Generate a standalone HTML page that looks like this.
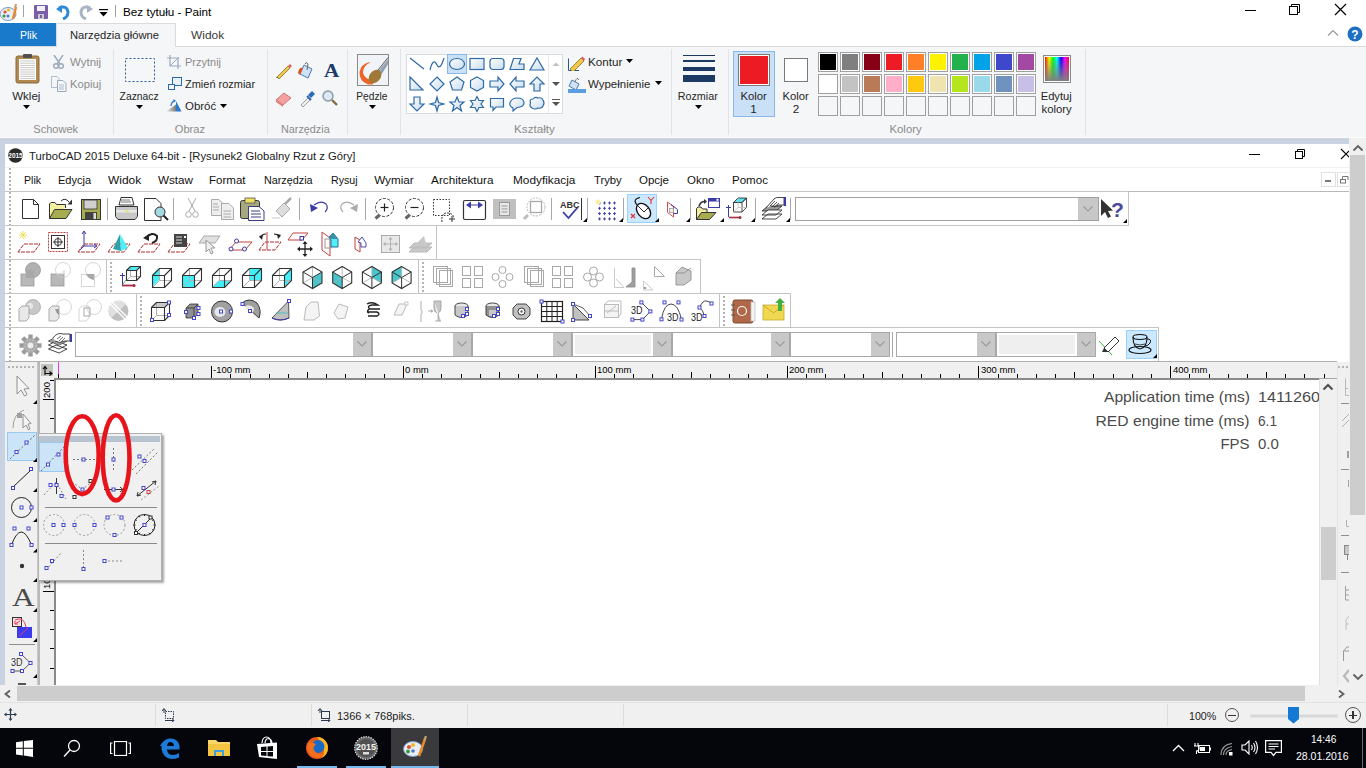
<!DOCTYPE html><html><head><meta charset="utf-8"><style>
html,body{margin:0;padding:0;width:1366px;height:768px;overflow:hidden;background:#fff}
body>div,body>svg{position:absolute}
.t{white-space:nowrap;font-family:"Liberation Sans",sans-serif}
</style></head><body>
<div style="left:0px;top:0px;width:1366px;height:23px;background:#fff"></div>
<div style="left:0px;top:23px;width:1366px;height:23px;background:#fff"></div>
<div style="left:0px;top:46px;width:1366px;height:1px;background:#dadbdc"></div>
<div style="left:0px;top:23px;width:56px;height:23px;background:#1979ca"></div>
<div style="left:56px;top:23px;width:120px;height:24px;background:#f5f6f7;border:1px solid #dadbdc;border-bottom:none;box-sizing:border-box"></div>
<div style="left:0px;top:47px;width:1366px;height:90px;background:#f5f6f7"></div>
<div style="left:0px;top:137px;width:1366px;height:1px;background:#fbfcfd"></div>
<div style="left:0px;top:138px;width:1366px;height:1px;background:#cfd4dc"></div>
<div style="left:0px;top:139px;width:1366px;height:546px;background:#c9d2e2"></div>
<div style="left:5px;top:144px;width:1344px;height:541px;background:#fff"></div>
<svg style="left:8px;top:148px;" width="15" height="15" viewBox="0 0 15 15"><circle cx="7.5" cy="7.5" r="7.3" fill="#2a2a2a"/><text x="7.5" y="10" font-family="Liberation Sans" font-weight="bold" font-size="6.5" fill="#fff" text-anchor="middle">2015</text></svg>
<div class="t" style="left:28.5px;top:149.5px;font-size:11.7px;line-height:12px;color:#1a1a1a;transform:scaleX(0.962);transform-origin:left;">TurboCAD 2015 Deluxe 64-bit - [Rysunek2 Globalny Rzut z Góry]</div>
<svg style="left:1249px;top:148px;" width="14" height="12" viewBox="0 0 14 12"><rect x="0" y="6" width="11" height="1" fill="#000"/></svg>
<svg style="left:1294px;top:148px;" width="14" height="12" viewBox="0 0 14 12"><rect x="1.5" y="3.5" width="7" height="7" fill="none" stroke="#000"/><path d="M3.5 3.5 V1.5 H10.5 V8.5 H8.5" fill="none" stroke="#000"/></svg>
<svg style="left:1340px;top:148px;" width="9" height="12" viewBox="0 0 9 12"><path d="M1 1 L11 11 M11 1 L1 11" stroke="#000" stroke-width="1.1"/></svg>
<div style="left:5px;top:167px;width:1344px;height:1px;background:#f0f0f0"></div>
<svg style="left:9px;top:168px" width="3" height="196" viewBox="0 0 3 196"><rect x="0" y="0" width="2" height="2" fill="#b4b4b4"/><rect x="0" y="4" width="2" height="2" fill="#b4b4b4"/><rect x="0" y="8" width="2" height="2" fill="#b4b4b4"/><rect x="0" y="12" width="2" height="2" fill="#b4b4b4"/><rect x="0" y="16" width="2" height="2" fill="#b4b4b4"/><rect x="0" y="20" width="2" height="2" fill="#b4b4b4"/><rect x="0" y="24" width="2" height="2" fill="#b4b4b4"/><rect x="0" y="28" width="2" height="2" fill="#b4b4b4"/><rect x="0" y="32" width="2" height="2" fill="#b4b4b4"/><rect x="0" y="36" width="2" height="2" fill="#b4b4b4"/><rect x="0" y="40" width="2" height="2" fill="#b4b4b4"/><rect x="0" y="44" width="2" height="2" fill="#b4b4b4"/><rect x="0" y="48" width="2" height="2" fill="#b4b4b4"/><rect x="0" y="52" width="2" height="2" fill="#b4b4b4"/><rect x="0" y="56" width="2" height="2" fill="#b4b4b4"/><rect x="0" y="60" width="2" height="2" fill="#b4b4b4"/><rect x="0" y="64" width="2" height="2" fill="#b4b4b4"/><rect x="0" y="68" width="2" height="2" fill="#b4b4b4"/><rect x="0" y="72" width="2" height="2" fill="#b4b4b4"/><rect x="0" y="76" width="2" height="2" fill="#b4b4b4"/><rect x="0" y="80" width="2" height="2" fill="#b4b4b4"/><rect x="0" y="84" width="2" height="2" fill="#b4b4b4"/><rect x="0" y="88" width="2" height="2" fill="#b4b4b4"/><rect x="0" y="92" width="2" height="2" fill="#b4b4b4"/><rect x="0" y="96" width="2" height="2" fill="#b4b4b4"/><rect x="0" y="100" width="2" height="2" fill="#b4b4b4"/><rect x="0" y="104" width="2" height="2" fill="#b4b4b4"/><rect x="0" y="108" width="2" height="2" fill="#b4b4b4"/><rect x="0" y="112" width="2" height="2" fill="#b4b4b4"/><rect x="0" y="116" width="2" height="2" fill="#b4b4b4"/><rect x="0" y="120" width="2" height="2" fill="#b4b4b4"/><rect x="0" y="124" width="2" height="2" fill="#b4b4b4"/><rect x="0" y="128" width="2" height="2" fill="#b4b4b4"/><rect x="0" y="132" width="2" height="2" fill="#b4b4b4"/><rect x="0" y="136" width="2" height="2" fill="#b4b4b4"/><rect x="0" y="140" width="2" height="2" fill="#b4b4b4"/><rect x="0" y="144" width="2" height="2" fill="#b4b4b4"/><rect x="0" y="148" width="2" height="2" fill="#b4b4b4"/><rect x="0" y="152" width="2" height="2" fill="#b4b4b4"/><rect x="0" y="156" width="2" height="2" fill="#b4b4b4"/><rect x="0" y="160" width="2" height="2" fill="#b4b4b4"/><rect x="0" y="164" width="2" height="2" fill="#b4b4b4"/><rect x="0" y="168" width="2" height="2" fill="#b4b4b4"/><rect x="0" y="172" width="2" height="2" fill="#b4b4b4"/><rect x="0" y="176" width="2" height="2" fill="#b4b4b4"/><rect x="0" y="180" width="2" height="2" fill="#b4b4b4"/><rect x="0" y="184" width="2" height="2" fill="#b4b4b4"/><rect x="0" y="188" width="2" height="2" fill="#b4b4b4"/><rect x="0" y="192" width="2" height="2" fill="#b4b4b4"/></svg>
<div class="t" style="left:23.5px;top:174.2px;font-size:11.7px;line-height:12px;color:#111;transform:scaleX(0.905);transform-origin:left;">Plik</div>
<div class="t" style="left:58.0px;top:174.2px;font-size:11.7px;line-height:12px;color:#111;transform:scaleX(0.944);transform-origin:left;">Edycja</div>
<div class="t" style="left:108.0px;top:174.2px;font-size:11.7px;line-height:12px;color:#111;transform:scaleX(1.020);transform-origin:left;">Widok</div>
<div class="t" style="left:158.0px;top:174.2px;font-size:11.7px;line-height:12px;color:#111;">Wstaw</div>
<div class="t" style="left:209.2px;top:174.2px;font-size:11.7px;line-height:12px;color:#111;transform:scaleX(0.987);transform-origin:left;">Format</div>
<div class="t" style="left:263.5px;top:174.2px;font-size:11.7px;line-height:12px;color:#111;transform:scaleX(0.922);transform-origin:left;">Narzędzia</div>
<div class="t" style="left:330.5px;top:174.2px;font-size:11.7px;line-height:12px;color:#111;transform:scaleX(0.910);transform-origin:left;">Rysuj</div>
<div class="t" style="left:374.2px;top:174.2px;font-size:11.7px;line-height:12px;color:#111;">Wymiar</div>
<div class="t" style="left:431.1px;top:174.2px;font-size:11.7px;line-height:12px;color:#111;">Architektura</div>
<div class="t" style="left:512.5px;top:174.2px;font-size:11.7px;line-height:12px;color:#111;transform:scaleX(1.012);transform-origin:left;">Modyfikacja</div>
<div class="t" style="left:593.5px;top:174.2px;font-size:11.7px;line-height:12px;color:#111;transform:scaleX(0.964);transform-origin:left;">Tryby</div>
<div class="t" style="left:639.2px;top:174.2px;font-size:11.7px;line-height:12px;color:#111;transform:scaleX(0.983);transform-origin:left;">Opcje</div>
<div class="t" style="left:686.5px;top:174.2px;font-size:11.7px;line-height:12px;color:#111;transform:scaleX(0.980);transform-origin:left;">Okno</div>
<div class="t" style="left:731.5px;top:174.2px;font-size:11.7px;line-height:12px;color:#111;transform:scaleX(0.988);transform-origin:left;">Pomoc</div>
<div style="left:1321px;top:172px;width:15px;height:15px;border:1px solid #e0e0e0;box-sizing:border-box"></div>
<svg style="left:1325px;top:180px;" width="8" height="3" viewBox="0 0 8 3"><rect x="0" y="0" width="6" height="2" fill="#777"/></svg>
<div style="left:1337px;top:172px;width:12px;height:15px;border:1px solid #e0e0e0;border-right:none;box-sizing:border-box"></div>
<svg style="left:1340px;top:175px;" width="9" height="9" viewBox="0 0 9 9"><rect x="0.5" y="4.5" width="5" height="3.5" fill="none" stroke="#777"/><path d="M2.5 4.5 V1.5 H8 V5" fill="none" stroke="#777"/></svg>
<div style="left:5px;top:191px;width:1344px;height:1px;background:#b8b8b8"></div>
<div style="left:5px;top:191px;width:1123px;height:1px;background:#c4c4c4"></div>
<div style="left:5px;top:225px;width:1123px;height:1px;background:#c4c4c4"></div>
<div style="left:1128px;top:191px;width:1px;height:35px;background:#c4c4c4"></div>
<div style="left:5px;top:225px;width:431px;height:1px;background:#c4c4c4"></div>
<div style="left:5px;top:259px;width:431px;height:1px;background:#c4c4c4"></div>
<div style="left:436px;top:225px;width:1px;height:35px;background:#c4c4c4"></div>
<div style="left:5px;top:259px;width:101px;height:1px;background:#c4c4c4"></div>
<div style="left:5px;top:293px;width:101px;height:1px;background:#c4c4c4"></div>
<div style="left:106px;top:259px;width:1px;height:35px;background:#c4c4c4"></div>
<div style="left:106px;top:259px;width:312px;height:1px;background:#c4c4c4"></div>
<div style="left:106px;top:293px;width:312px;height:1px;background:#c4c4c4"></div>
<div style="left:418px;top:259px;width:1px;height:35px;background:#c4c4c4"></div>
<svg style="left:110px;top:262px" width="3" height="30" viewBox="0 0 3 30"><rect x="0" y="0" width="2" height="2" fill="#b4b4b4"/><rect x="0" y="4" width="2" height="2" fill="#b4b4b4"/><rect x="0" y="8" width="2" height="2" fill="#b4b4b4"/><rect x="0" y="12" width="2" height="2" fill="#b4b4b4"/><rect x="0" y="16" width="2" height="2" fill="#b4b4b4"/><rect x="0" y="20" width="2" height="2" fill="#b4b4b4"/><rect x="0" y="24" width="2" height="2" fill="#b4b4b4"/><rect x="0" y="28" width="2" height="2" fill="#b4b4b4"/></svg>
<div style="left:418px;top:259px;width:282px;height:1px;background:#c4c4c4"></div>
<div style="left:418px;top:293px;width:282px;height:1px;background:#c4c4c4"></div>
<div style="left:700px;top:259px;width:1px;height:35px;background:#c4c4c4"></div>
<svg style="left:422px;top:262px" width="3" height="30" viewBox="0 0 3 30"><rect x="0" y="0" width="2" height="2" fill="#b4b4b4"/><rect x="0" y="4" width="2" height="2" fill="#b4b4b4"/><rect x="0" y="8" width="2" height="2" fill="#b4b4b4"/><rect x="0" y="12" width="2" height="2" fill="#b4b4b4"/><rect x="0" y="16" width="2" height="2" fill="#b4b4b4"/><rect x="0" y="20" width="2" height="2" fill="#b4b4b4"/><rect x="0" y="24" width="2" height="2" fill="#b4b4b4"/><rect x="0" y="28" width="2" height="2" fill="#b4b4b4"/></svg>
<div style="left:5px;top:293px;width:131px;height:1px;background:#c4c4c4"></div>
<div style="left:5px;top:327px;width:131px;height:1px;background:#c4c4c4"></div>
<div style="left:136px;top:293px;width:1px;height:35px;background:#c4c4c4"></div>
<div style="left:136px;top:293px;width:583px;height:1px;background:#c4c4c4"></div>
<div style="left:136px;top:327px;width:583px;height:1px;background:#c4c4c4"></div>
<div style="left:719px;top:293px;width:1px;height:35px;background:#c4c4c4"></div>
<svg style="left:140px;top:296px" width="3" height="30" viewBox="0 0 3 30"><rect x="0" y="0" width="2" height="2" fill="#b4b4b4"/><rect x="0" y="4" width="2" height="2" fill="#b4b4b4"/><rect x="0" y="8" width="2" height="2" fill="#b4b4b4"/><rect x="0" y="12" width="2" height="2" fill="#b4b4b4"/><rect x="0" y="16" width="2" height="2" fill="#b4b4b4"/><rect x="0" y="20" width="2" height="2" fill="#b4b4b4"/><rect x="0" y="24" width="2" height="2" fill="#b4b4b4"/><rect x="0" y="28" width="2" height="2" fill="#b4b4b4"/></svg>
<div style="left:719px;top:293px;width:71px;height:1px;background:#c4c4c4"></div>
<div style="left:719px;top:327px;width:71px;height:1px;background:#c4c4c4"></div>
<div style="left:790px;top:293px;width:1px;height:35px;background:#c4c4c4"></div>
<svg style="left:723px;top:296px" width="3" height="30" viewBox="0 0 3 30"><rect x="0" y="0" width="2" height="2" fill="#b4b4b4"/><rect x="0" y="4" width="2" height="2" fill="#b4b4b4"/><rect x="0" y="8" width="2" height="2" fill="#b4b4b4"/><rect x="0" y="12" width="2" height="2" fill="#b4b4b4"/><rect x="0" y="16" width="2" height="2" fill="#b4b4b4"/><rect x="0" y="20" width="2" height="2" fill="#b4b4b4"/><rect x="0" y="24" width="2" height="2" fill="#b4b4b4"/><rect x="0" y="28" width="2" height="2" fill="#b4b4b4"/></svg>
<div style="left:5px;top:327px;width:1153px;height:1px;background:#c4c4c4"></div>
<div style="left:5px;top:361px;width:1153px;height:1px;background:#c4c4c4"></div>
<div style="left:1158px;top:327px;width:1px;height:35px;background:#c4c4c4"></div>
<div style="left:107px;top:198px;width:1px;height:22px;background:#a8a8a8"></div>
<div style="left:173px;top:198px;width:1px;height:22px;background:#a8a8a8"></div>
<div style="left:299px;top:198px;width:1px;height:22px;background:#a8a8a8"></div>
<div style="left:365px;top:198px;width:1px;height:22px;background:#a8a8a8"></div>
<div style="left:551px;top:198px;width:1px;height:22px;background:#a8a8a8"></div>
<div style="left:587px;top:198px;width:1px;height:22px;background:#a8a8a8"></div>
<div style="left:623px;top:198px;width:1px;height:22px;background:#a8a8a8"></div>
<div style="left:690px;top:198px;width:1px;height:22px;background:#a8a8a8"></div>
<div style="left:755px;top:198px;width:1px;height:22px;background:#a8a8a8"></div>
<div style="left:790px;top:198px;width:1px;height:22px;background:#a8a8a8"></div>
<div style="left:795px;top:197px;width:304px;height:24px;background:#fff;border:1px solid #a0a0a0;box-sizing:border-box"></div>
<div style="left:1078px;top:198px;width:20px;height:22px;background:#c8c8c8"></div>
<svg style="left:1082px;top:205px;" width="12" height="8" viewBox="0 0 12 8"><path d="M1.5 1.5 L6 6 L10.5 1.5" fill="none" stroke="#9a9a9a" stroke-width="1.2"/></svg>
<div style="left:75px;top:332px;width:297px;height:25px;background:#fff;border:1px solid #a8a8a8;box-sizing:border-box"></div>
<div style="left:353px;top:333px;width:18px;height:23px;background:#c8c8c8"></div>
<svg style="left:356px;top:340px;" width="12" height="8" viewBox="0 0 12 8"><path d="M1.5 1.5 L6 6 L10.5 1.5" fill="none" stroke="#9a9a9a" stroke-width="1.2"/></svg>
<div style="left:372px;top:332px;width:100px;height:25px;background:#fff;border:1px solid #a8a8a8;box-sizing:border-box"></div>
<div style="left:453px;top:333px;width:18px;height:23px;background:#c8c8c8"></div>
<svg style="left:456px;top:340px;" width="12" height="8" viewBox="0 0 12 8"><path d="M1.5 1.5 L6 6 L10.5 1.5" fill="none" stroke="#9a9a9a" stroke-width="1.2"/></svg>
<div style="left:472px;top:332px;width:100px;height:25px;background:#fff;border:1px solid #a8a8a8;box-sizing:border-box"></div>
<div style="left:553px;top:333px;width:18px;height:23px;background:#c8c8c8"></div>
<svg style="left:556px;top:340px;" width="12" height="8" viewBox="0 0 12 8"><path d="M1.5 1.5 L6 6 L10.5 1.5" fill="none" stroke="#9a9a9a" stroke-width="1.2"/></svg>
<div style="left:572px;top:332px;width:100px;height:25px;background:#fff;border:1px solid #a8a8a8;box-sizing:border-box"></div>
<div style="left:575px;top:335px;width:76px;height:19px;background:#efefef"></div>
<div style="left:653px;top:333px;width:18px;height:23px;background:#c8c8c8"></div>
<svg style="left:656px;top:340px;" width="12" height="8" viewBox="0 0 12 8"><path d="M1.5 1.5 L6 6 L10.5 1.5" fill="none" stroke="#9a9a9a" stroke-width="1.2"/></svg>
<div style="left:672px;top:332px;width:118px;height:25px;background:#fff;border:1px solid #a8a8a8;box-sizing:border-box"></div>
<div style="left:771px;top:333px;width:18px;height:23px;background:#c8c8c8"></div>
<svg style="left:774px;top:340px;" width="12" height="8" viewBox="0 0 12 8"><path d="M1.5 1.5 L6 6 L10.5 1.5" fill="none" stroke="#9a9a9a" stroke-width="1.2"/></svg>
<div style="left:790px;top:332px;width:100px;height:25px;background:#fff;border:1px solid #a8a8a8;box-sizing:border-box"></div>
<div style="left:871px;top:333px;width:18px;height:23px;background:#c8c8c8"></div>
<svg style="left:874px;top:340px;" width="12" height="8" viewBox="0 0 12 8"><path d="M1.5 1.5 L6 6 L10.5 1.5" fill="none" stroke="#9a9a9a" stroke-width="1.2"/></svg>
<div style="left:892px;top:332px;width:1px;height:25px;background:#a8a8a8"></div>
<div style="left:896px;top:332px;width:100px;height:25px;background:#fff;border:1px solid #a8a8a8;box-sizing:border-box"></div>
<div style="left:977px;top:333px;width:18px;height:23px;background:#c8c8c8"></div>
<svg style="left:980px;top:340px;" width="12" height="8" viewBox="0 0 12 8"><path d="M1.5 1.5 L6 6 L10.5 1.5" fill="none" stroke="#9a9a9a" stroke-width="1.2"/></svg>
<div style="left:996px;top:332px;width:100px;height:25px;background:#fff;border:1px solid #a8a8a8;box-sizing:border-box"></div>
<div style="left:999px;top:335px;width:76px;height:19px;background:#efefef"></div>
<div style="left:1077px;top:333px;width:18px;height:23px;background:#c8c8c8"></div>
<svg style="left:1080px;top:340px;" width="12" height="8" viewBox="0 0 12 8"><path d="M1.5 1.5 L6 6 L10.5 1.5" fill="none" stroke="#9a9a9a" stroke-width="1.2"/></svg>
<div style="left:5px;top:361px;width:1332px;height:2px;background:#b0b0b0"></div>
<div style="left:40px;top:362px;width:1297px;height:16px;background:#f0f0f0"></div>
<div style="left:54px;top:378px;width:1265px;height:2px;background:#8a8a8a"></div>
<div style="left:41px;top:364px;width:12px;height:13px;background:#c0c4bc"></div>
<svg style="left:42px;top:365px;" width="11" height="11" viewBox="0 0 11 11"><path d="M3 10 V2 M1 4 L3 1.5 L5 4 M3 8.5 H10 M7.5 6.5 L10 8.5 L7.5 10.5" fill="none" stroke="#000" stroke-width="1.1"/></svg>
<div style="left:58px;top:362px;width:1px;height:16px;background:#e040e0"></div>
<svg style="left:0px;top:0px" width="1366" height="768" viewBox="0 0 1366 768"><rect x="58" y="374" width="1" height="4" fill="#000"/><rect x="77" y="374" width="1" height="4" fill="#000"/><rect x="96" y="374" width="1" height="4" fill="#000"/><rect x="115" y="372" width="1" height="6" fill="#000"/><rect x="134" y="374" width="1" height="4" fill="#000"/><rect x="154" y="374" width="1" height="4" fill="#000"/><rect x="173" y="374" width="1" height="4" fill="#000"/><rect x="192" y="374" width="1" height="4" fill="#000"/><rect x="211" y="366" width="1" height="12" fill="#000"/><rect x="230" y="374" width="1" height="4" fill="#000"/><rect x="250" y="374" width="1" height="4" fill="#000"/><rect x="269" y="374" width="1" height="4" fill="#000"/><rect x="288" y="374" width="1" height="4" fill="#000"/><rect x="307" y="372" width="1" height="6" fill="#000"/><rect x="326" y="374" width="1" height="4" fill="#000"/><rect x="345" y="374" width="1" height="4" fill="#000"/><rect x="365" y="374" width="1" height="4" fill="#000"/><rect x="384" y="374" width="1" height="4" fill="#000"/><rect x="403" y="366" width="1" height="12" fill="#000"/><rect x="422" y="374" width="1" height="4" fill="#000"/><rect x="441" y="374" width="1" height="4" fill="#000"/><rect x="461" y="374" width="1" height="4" fill="#000"/><rect x="480" y="374" width="1" height="4" fill="#000"/><rect x="499" y="372" width="1" height="6" fill="#000"/><rect x="518" y="374" width="1" height="4" fill="#000"/><rect x="537" y="374" width="1" height="4" fill="#000"/><rect x="556" y="374" width="1" height="4" fill="#000"/><rect x="576" y="374" width="1" height="4" fill="#000"/><rect x="595" y="366" width="1" height="12" fill="#000"/><rect x="614" y="374" width="1" height="4" fill="#000"/><rect x="633" y="374" width="1" height="4" fill="#000"/><rect x="652" y="374" width="1" height="4" fill="#000"/><rect x="672" y="374" width="1" height="4" fill="#000"/><rect x="691" y="372" width="1" height="6" fill="#000"/><rect x="710" y="374" width="1" height="4" fill="#000"/><rect x="729" y="374" width="1" height="4" fill="#000"/><rect x="748" y="374" width="1" height="4" fill="#000"/><rect x="767" y="374" width="1" height="4" fill="#000"/><rect x="787" y="366" width="1" height="12" fill="#000"/><rect x="806" y="374" width="1" height="4" fill="#000"/><rect x="825" y="374" width="1" height="4" fill="#000"/><rect x="844" y="374" width="1" height="4" fill="#000"/><rect x="863" y="374" width="1" height="4" fill="#000"/><rect x="882" y="372" width="1" height="6" fill="#000"/><rect x="902" y="374" width="1" height="4" fill="#000"/><rect x="921" y="374" width="1" height="4" fill="#000"/><rect x="940" y="374" width="1" height="4" fill="#000"/><rect x="959" y="374" width="1" height="4" fill="#000"/><rect x="978" y="366" width="1" height="12" fill="#000"/><rect x="998" y="374" width="1" height="4" fill="#000"/><rect x="1017" y="374" width="1" height="4" fill="#000"/><rect x="1036" y="374" width="1" height="4" fill="#000"/><rect x="1055" y="374" width="1" height="4" fill="#000"/><rect x="1074" y="372" width="1" height="6" fill="#000"/><rect x="1093" y="374" width="1" height="4" fill="#000"/><rect x="1113" y="374" width="1" height="4" fill="#000"/><rect x="1132" y="374" width="1" height="4" fill="#000"/><rect x="1151" y="374" width="1" height="4" fill="#000"/><rect x="1170" y="366" width="1" height="12" fill="#000"/><rect x="1189" y="374" width="1" height="4" fill="#000"/><rect x="1209" y="374" width="1" height="4" fill="#000"/><rect x="1228" y="374" width="1" height="4" fill="#000"/><rect x="1247" y="374" width="1" height="4" fill="#000"/><rect x="1266" y="372" width="1" height="6" fill="#000"/><rect x="1285" y="374" width="1" height="4" fill="#000"/><rect x="1304" y="374" width="1" height="4" fill="#000"/><rect x="1324" y="374" width="1" height="4" fill="#000"/></svg>
<div class="t" style="left:213.0px;top:365.0px;font-size:9.5px;line-height:9.5px;color:#000;">-100 mm</div>
<div class="t" style="left:405.0px;top:365.0px;font-size:9.5px;line-height:9.5px;color:#000;">0 mm</div>
<div class="t" style="left:597.0px;top:365.0px;font-size:9.5px;line-height:9.5px;color:#000;">100 mm</div>
<div class="t" style="left:789.0px;top:365.0px;font-size:9.5px;line-height:9.5px;color:#000;">200 mm</div>
<div class="t" style="left:981.0px;top:365.0px;font-size:9.5px;line-height:9.5px;color:#000;">300 mm</div>
<div class="t" style="left:1173.0px;top:365.0px;font-size:9.5px;line-height:9.5px;color:#000;">400 mm</div>
<div style="left:40px;top:376px;width:14px;height:309px;background:#f0f0f0"></div>
<div style="left:38px;top:362px;width:2px;height:323px;background:#b8b8b8"></div>
<svg style="left:0px;top:0px" width="1366" height="768" viewBox="0 0 1366 768"><rect x="50" y="380" width="4" height="1" fill="#000"/><rect x="43" y="399" width="11" height="1" fill="#000"/><rect x="50" y="418" width="4" height="1" fill="#000"/><rect x="50" y="437" width="4" height="1" fill="#000"/><rect x="50" y="457" width="4" height="1" fill="#000"/><rect x="50" y="476" width="4" height="1" fill="#000"/><rect x="48" y="495" width="6" height="1" fill="#000"/><rect x="50" y="514" width="4" height="1" fill="#000"/><rect x="50" y="533" width="4" height="1" fill="#000"/><rect x="50" y="552" width="4" height="1" fill="#000"/><rect x="50" y="572" width="4" height="1" fill="#000"/><rect x="43" y="591" width="11" height="1" fill="#000"/><rect x="50" y="610" width="4" height="1" fill="#000"/><rect x="50" y="629" width="4" height="1" fill="#000"/><rect x="50" y="648" width="4" height="1" fill="#000"/><rect x="50" y="668" width="4" height="1" fill="#000"/></svg>
<div class="t" style="left:36.5px;top:384.5px;width:20px;height:10px;font-size:9.6px;line-height:10px;transform:rotate(-90deg);text-align:center;color:#000">200</div>
<div class="t" style="left:36.5px;top:576.3px;width:20px;height:10px;font-size:9.6px;line-height:10px;transform:rotate(-90deg);text-align:center;color:#000">100</div>
<div style="left:54px;top:378px;width:2px;height:307px;background:#8a8a8a"></div>
<div style="left:56px;top:380px;width:1263px;height:305px;background:#fff"></div>
<div class="t" style="left:1109.6px;top:388.8px;font-size:15px;line-height:15px;color:#4a4a4a;transform:scaleX(1.043);transform-origin:right;">Application time (ms)</div>
<div class="t" style="left:1258.0px;top:388.8px;font-size:15px;line-height:15px;color:#4a4a4a;transform:scaleX(1.082);transform-origin:left;">1411260</div>
<div class="t" style="left:1102.1px;top:412.5px;font-size:15px;line-height:15px;color:#4a4a4a;transform:scaleX(1.044);transform-origin:right;">RED engine time (ms)</div>
<div class="t" style="left:1258.0px;top:412.5px;font-size:15px;line-height:15px;color:#4a4a4a;transform:scaleX(0.911);transform-origin:left;">6.1</div>
<div class="t" style="left:1220.4px;top:436.2px;font-size:15px;line-height:15px;color:#4a4a4a;">FPS</div>
<div class="t" style="left:1258.0px;top:436.2px;font-size:15px;line-height:15px;color:#4a4a4a;">0.0</div>
<div style="left:1319px;top:379px;width:18px;height:306px;background:#f0f0f0"></div>
<div style="left:1319px;top:379px;width:1px;height:306px;background:#e0e0e0"></div>
<div style="left:1319px;top:378px;width:18px;height:1px;background:#a8a8a8"></div>
<svg style="left:1322px;top:383px;" width="12" height="8" viewBox="0 0 12 8"><path d="M1.5 6.5 L6 2 L10.5 6.5" fill="none" stroke="#505050" stroke-width="2.2"/></svg>
<div style="left:1321px;top:527px;width:15px;height:53px;background:#cdcdcd"></div>
<div style="left:1337px;top:362px;width:12px;height:323px;background:#f0f0f0"></div>
<div style="left:1337px;top:362px;width:1px;height:323px;background:#e4e4e4"></div>
<div style="left:5px;top:362px;width:33px;height:323px;background:#f0f0f0"></div>
<div style="left:37px;top:362px;width:1px;height:323px;background:#c8c8c8"></div>
<svg style="left:8px;top:366px" width="28" height="3" viewBox="0 0 28 3"><rect x="0" y="0" width="2" height="2" fill="#b4b4b4"/><rect x="4" y="0" width="2" height="2" fill="#b4b4b4"/><rect x="8" y="0" width="2" height="2" fill="#b4b4b4"/><rect x="12" y="0" width="2" height="2" fill="#b4b4b4"/><rect x="16" y="0" width="2" height="2" fill="#b4b4b4"/><rect x="20" y="0" width="2" height="2" fill="#b4b4b4"/><rect x="24" y="0" width="2" height="2" fill="#b4b4b4"/></svg>
<svg style="left:0px;top:0px" width="1366" height="768" viewBox="0 0 1366 768"><path d="M22.5 199.5 H33.5 L38.5 204.5 V218.5 H22.5 Z" fill="#fff" stroke="#333" stroke-width="1"/><path d="M33.5 199.5 V204.5 H38.5" fill="none" stroke="#333"/><path d="M49.5 218.5 V204 L51 202.5 H55 L56.5 204.5 H65.5 V208" fill="#f4f0a0" stroke="#333"/><path d="M49.5 218.5 L54.5 209.5 H72 L66 218.5 Z" fill="#a8ac50" stroke="#333"/><path d="M61 201 Q65 197 69 202" fill="none" stroke="#333"/><path d="M67.5 204.5 L72 199.5 V204.5 Z" fill="#333"/><rect x="81.5" y="199.5" width="19" height="20" fill="#a8ac50" stroke="#333"/><rect x="84" y="200" width="13" height="9" fill="#d0d0d0" stroke="#333" stroke-width="0.8"/><rect x="85" y="212" width="12" height="7.5" fill="#444"/><rect x="93.5" y="213" width="2.5" height="6" fill="#ddd"/><path d="M121 197.5 H132 L134 205 H119 Z" fill="#fff" stroke="#333"/><path d="M121 200 H130 M121 202 H131" stroke="#555" stroke-width="0.8"/><path d="M115.5 206.5 H137.5 V216.5 L135 219.5 H118 L115.5 216.5 Z" fill="#c8c8c8" stroke="#333"/><rect x="116" y="210" width="21" height="2.5" fill="#e8e8e8"/><rect x="125" y="210.5" width="4" height="1.5" fill="#e8e860"/><path d="M144.5 198.5 H156 L161 203.5 V220.5 H144.5 Z" fill="#fff" stroke="#333"/><circle cx="160" cy="212" r="5" fill="#a8d8e0" stroke="#333"/><path d="M163.5 215.5 L168 220" stroke="#222" stroke-width="2"/><path d="M188 198 L195 211 M196 198 L189 211" stroke="#aaa"/><circle cx="188.5" cy="214.5" r="2.8" fill="none" stroke="#aaa"/><circle cx="195.5" cy="214.5" r="2.8" fill="none" stroke="#aaa"/><path d="M211.5 199.5 H219 L222 202.5 V215.5 H211.5 Z" fill="#eee" stroke="#aaa"/><path d="M221.5 203.5 H229 L233.5 208 V219.5 H221.5 Z" fill="#eee" stroke="#aaa"/><path d="M213 204 H218 M213 207 H219 M213 210 H219 M223.5 211 H231 M223.5 214 H231 M223.5 217 H231" stroke="#aaa"/><rect x="240.5" y="200.5" width="19" height="18" rx="2" fill="#a8a880" stroke="#333"/><rect x="245" y="198" width="10" height="5" fill="#f0e060" stroke="#555" stroke-width="0.8"/><path d="M248.5 206.5 H259 L264 211 V220.5 H248.5 Z" fill="#fff" stroke="#3a3a8a"/><path d="M251 211 H260 M251 214 H261 M251 217 H261" stroke="#3a3a8a"/><path d="M276 211 L284 203 L290 209 L282 217 Z" fill="#ddd" stroke="#aaa"/><path d="M285 204 L291 198" stroke="#aaa" stroke-width="2.5"/><path d="M272 218 H280" stroke="#ddd" stroke-width="1.5"/><path d="M314 205 Q321 200 326 204 Q329 208 325 212" fill="none" stroke="#3a3aa8" stroke-width="1.2"/><path d="M310 204 L318 208 L311 212 Z" fill="#3a3aa8"/><path d="M354 205 Q347 200 342 204 Q339 208 343 212" fill="none" stroke="#aaa" stroke-width="1.2"/><path d="M358 204 L350 208 L357 212 Z" fill="#aaa"/><circle cx="384.5" cy="207.5" r="9" fill="#fff" stroke="#333" stroke-dasharray="3,1.5"/><path d="M380.5 207.5 H388.5" stroke="#222" stroke-width="1.2"/><path d="M384.5 203.5 V211.5" stroke="#222" stroke-width="1.2"/><path d="M375.5 218.5 L379.5 215" stroke="#666" stroke-width="3"/><circle cx="414.5" cy="207.5" r="9" fill="#fff" stroke="#333" stroke-dasharray="3,1.5"/><path d="M410.5 207.5 H418.5" stroke="#222" stroke-width="1.2"/><path d="M405.5 218.5 L409.5 215" stroke="#666" stroke-width="3"/><rect x="433.5" y="199.5" width="16" height="16" fill="none" stroke="#333" stroke-dasharray="1.5,1.5"/><path d="M442 222 Q441 213 447 213 Q453 213 454 218" fill="none" stroke="#333" stroke-dasharray="2,1"/><path d="M449 219 H455 M452 216 V222" stroke="#333"/><rect x="463.5" y="200.5" width="22" height="19" rx="1.5" fill="#fff" stroke="#333" stroke-width="1.2"/><path d="M466 205 L471 201.5 V208.5 Z M483 205 L478 201.5 V208.5 Z" fill="#3a3aa8"/><path d="M470 205 H479" stroke="#3a3aa8"/><rect x="493" y="199" width="23" height="20" fill="#c0c0c0"/><rect x="499.5" y="202.5" width="10" height="13" fill="#e8e8e8" stroke="#999"/><path d="M501.5 206 H507.5 M501.5 209 H507.5 M501.5 212 H507.5" stroke="#999"/><circle cx="536" cy="207" r="9" fill="none" stroke="#bbb" stroke-dasharray="2,1"/><rect x="530.5" y="201.5" width="11" height="11" fill="none" stroke="#aaa" stroke-width="1.3"/><path d="M524 219 L528 215" stroke="#bbb" stroke-width="3"/><path d="M563 212 L568.5 218 L578 207" fill="none" stroke="#3a3aa8" stroke-width="1.8"/><rect x="581" y="198" width="1" height="22" fill="#333"/><path d="M583 222 L587 218 L587 222 Z" fill="#000"/><path d="M598 203.0 h3 M599.5 201.5 v3" stroke="#3a3aa8" stroke-width="0.9"/><path d="M603 203.0 h3 M604.5 201.5 v3" stroke="#3a3aa8" stroke-width="0.9"/><path d="M608 203.0 h3 M609.5 201.5 v3" stroke="#3a3aa8" stroke-width="0.9"/><path d="M613 203.0 h3 M614.5 201.5 v3" stroke="#3a3aa8" stroke-width="0.9"/><path d="M598 208.3 h3 M599.5 206.8 v3" stroke="#3a3aa8" stroke-width="0.9"/><path d="M603 208.3 h3 M604.5 206.8 v3" stroke="#3a3aa8" stroke-width="0.9"/><path d="M608 208.3 h3 M609.5 206.8 v3" stroke="#3a3aa8" stroke-width="0.9"/><path d="M613 208.3 h3 M614.5 206.8 v3" stroke="#3a3aa8" stroke-width="0.9"/><path d="M598 213.6 h3 M599.5 212.1 v3" stroke="#3a3aa8" stroke-width="0.9"/><path d="M603 213.6 h3 M604.5 212.1 v3" stroke="#3a3aa8" stroke-width="0.9"/><path d="M608 213.6 h3 M609.5 212.1 v3" stroke="#3a3aa8" stroke-width="0.9"/><path d="M613 213.6 h3 M614.5 212.1 v3" stroke="#3a3aa8" stroke-width="0.9"/><path d="M598 218.9 h3 M599.5 217.4 v3" stroke="#3a3aa8" stroke-width="0.9"/><path d="M603 218.9 h3 M604.5 217.4 v3" stroke="#3a3aa8" stroke-width="0.9"/><path d="M608 218.9 h3 M609.5 217.4 v3" stroke="#3a3aa8" stroke-width="0.9"/><path d="M613 218.9 h3 M614.5 217.4 v3" stroke="#3a3aa8" stroke-width="0.9"/><circle cx="598" cy="202" r="2.5" fill="#f8f0a0"/><path d="M619 222 L623 218 L623 222 Z" fill="#000"/><rect x="627.5" y="194.5" width="29" height="28" fill="#cce8ff" stroke="#99d1ff"/><path d="M637 205 Q632 199 640 197.5" fill="none" stroke="#111" stroke-width="1.1"/><ellipse cx="643.5" cy="211" rx="6" ry="8.5" transform="rotate(-40 643.5 211)" fill="#fff" stroke="#111" stroke-width="1.4"/><path d="M638 206 L644 212 L649 207" fill="none" stroke="#111" stroke-width="0.9"/><path d="M648 197 L651 200.5 L654 197 M651 200.5 V204" fill="none" stroke="#e03030" stroke-width="1.1"/><path d="M631 214 L635 218 M635 214 L631 218" stroke="#e03030" stroke-width="1.1"/><path d="M655 222 L659 218 L659 222 Z" fill="#000"/><path d="M686 222 L690 218 L690 222 Z" fill="#000"/><path d="M667.5 202 L673.5 206.5 V217 L667.5 212.5 Z" fill="none" stroke="#d85050"/><rect x="669.5" y="208.5" width="4" height="4" fill="#eee" stroke="#999" stroke-width="0.8"/><path d="M671 204.5 L677.5 209.5 V213.5 H673.5" fill="none" stroke="#3a3aa8"/><path d="M696.5 219.5 V208.5 L698 207 H701 L702.5 209 H707 V212" fill="#f0eca0" stroke="#333"/><path d="M696.5 219.5 L701.5 212.5 H716 L709.5 219.5 Z" fill="#a8ac50" stroke="#333"/><path d="M699 206 Q701 201 705 201.5" fill="none" stroke="#333" stroke-width="1.6"/><path d="M704 199 L707 201.5 L704 204 Z" fill="#333"/><rect x="708.5" y="198.5" width="11" height="9" fill="#fff" stroke="#3a3aa8"/><rect x="708" y="198" width="12" height="3.5" fill="#3a3aa8"/><rect x="716.5" y="198.8" width="2" height="2" fill="#fff"/><path d="M720 222 L724 218 L724 222 Z" fill="#000"/><path d="M733.5 202.5 L738 198 H746.5 L742 202.5 Z" fill="#50e8f0" stroke="#333" stroke-width="0.9"/><path d="M733.5 202.5 H742 V212 H733.5 Z M742 212 L746.5 207.5 V198 M742 202.5 L746.5 198" fill="none" stroke="#333" stroke-width="0.9"/><path d="M738 198 V207.5 H746.5 M738 207.5 L733.5 212" fill="none" stroke="#bbb" stroke-width="0.8"/><path d="M728.5 205 V217 M726 207.5 H731" stroke="#3a3aa8" stroke-width="1"/><path d="M729 217.5 H740" stroke="#a03040" stroke-width="1.6"/><circle cx="740" cy="217.5" r="1.5" fill="#a03040"/><path d="M751 222 L755 218 L755 222 Z" fill="#000"/><path d="M762 211 L768 206 H782 L776 211 Z" fill="#999" stroke="#333" stroke-width="0.9"/><path d="M762 215 L768 210 H782 L776 215 Z M762 219 L768 214 H782 L776 219 Z" fill="#fff" stroke="#333" stroke-width="0.9"/><path d="M766 208 L774 199 Q776 197 779 197.5 H784 V205 H779 Q775 207 771 206" fill="#fff" stroke="#333" stroke-width="0.9"/><path d="M770 206 L775 201 M772 207 L777 202 M774 207.5 L779 203" stroke="#333" stroke-width="0.8"/><rect x="784" y="197" width="2" height="9" fill="#3a3aa8"/><path d="M786 222 L790 218 L790 222 Z" fill="#000"/><path d="M1101 199 V216 L1105 212 L1108 218 L1111 216.5 L1108 211 L1113 210.5 Z" fill="#333"/><text x="1117.5" y="216.5" font-family="Liberation Sans" font-weight="bold" font-size="21" fill="#4a4a9a" text-anchor="middle">?</text><path d="M1123 223 L1127 219 L1127 223 Z" fill="#000"/></svg>
<div class="t" style="left:560.0px;top:200.9px;font-size:9px;line-height:9px;color:#333;font-weight:bold;">ABC</div>
<svg style="left:0px;top:0px" width="1366" height="768" viewBox="0 0 1366 768"><path d="M20 232 L26 238 M26 232 L20 238 M23 231 V239 M19 235 H27" stroke="#e8e060"/><path d="M18 252 L24 244 H40 L34 252 Z" fill="none" stroke="#b03030" stroke-dasharray="4,1"/><rect x="48.5" y="232.5" width="19" height="19" fill="#fff" stroke="#c04040" stroke-dasharray="2,1"/><rect x="51.5" y="235.5" width="13" height="13" fill="#fff" stroke="#333"/><circle cx="58" cy="242" r="3.5" fill="none" stroke="#333"/><path d="M58 237 V247 M53 242 H63" stroke="#333"/><path d="M78 252 L84 244 H100 L94 252 Z" fill="none" stroke="#b03030" stroke-dasharray="4,1"/><path d="M84 232 V246 L80 250 M84 246 H96" fill="none" stroke="#3a3aa8"/><path d="M82 234 L84 231 L86 234 M94 244 L97 246 L94 248" fill="none" stroke="#3a3aa8"/><path d="M108 252 L114 244 H130 L124 252 Z" fill="none" stroke="#b03030" stroke-dasharray="4,1"/><path d="M120 234 L113 249 L121 251 Z" fill="#30a0a8"/><path d="M120 234 L121 251 L128 248 Z" fill="#50f0f8"/><path d="M138 252 L144 244 H160 L154 252 Z" fill="none" stroke="#b03030" stroke-dasharray="4,1"/><path d="M146 238 Q152 231 157 236 Q158 241 152 243" fill="none" stroke="#222" stroke-width="2"/><path d="M143 238 L149 234 L149 241 Z" fill="#222"/><path d="M168 252 L174 244 H190 L184 252 Z" fill="none" stroke="#b03030" stroke-dasharray="4,1"/><rect x="174" y="234" width="13" height="13" fill="#444"/><path d="M176 237 H182 M176 240 H182 M176 243 H182" stroke="#ddd"/><rect x="184" y="236" width="2" height="2" fill="#fff"/><path d="M199 243 L204 236 H220 L215 243 Z" fill="#e0e0e0" stroke="#aaa"/><path d="M206 240 V252 L209 249 L211 254 L213 253 L211 248 L215 248 Z" fill="#f0f0f0" stroke="#999"/><path d="M229 250 L236 242 H252 L245 250 Z" fill="none" stroke="#c04040"/><circle cx="236.5" cy="241" r="2" fill="#fff" stroke="#3a3aa8"/><circle cx="231" cy="249" r="2" fill="#fff" stroke="#3a3aa8"/><circle cx="244.5" cy="249" r="2" fill="#fff" stroke="#3a3aa8"/><path d="M259 250 L265 242 H281 L275 250 Z" fill="none" stroke="#b03030" stroke-dasharray="4,1"/><path d="M267 232 V250" stroke="#c04040"/><path d="M260 238 Q262 234 266 234 M274 234 Q278 234 280 237" fill="none" stroke="#222" stroke-width="1.2"/><path d="M259 236 L262 240 L263 235 Z M281 235 L278 239 L277 234 Z" fill="#222"/><path d="M288 240 L293 233 H308 L302 240 Z" fill="none" stroke="#c04040"/><rect x="300" y="236.5" width="3.5" height="3.5" fill="#fff" stroke="#3a3aa8"/><path d="M305 242 V256 M298 249 H312" stroke="#222" stroke-width="1.3"/><path d="M305 241 L302.5 244 H307.5 Z M305 257 L302.5 254 H307.5 Z M297 249 L300 246.5 V251.5 Z M313 249 L310 246.5 V251.5 Z" fill="#222"/><path d="M322 232 L330 238 V256 L322 250 Z" fill="none" stroke="#c04040"/><rect x="325" y="239" width="6" height="9" fill="none" stroke="#999"/><path d="M329 237 L333 233 L338 239 V247 H331 V240 Z" fill="#50f0f8" stroke="#2a6a90"/><path d="M329 237 L333 233 L338 239 H331 Z" fill="#3a90a8"/><path d="M355 237 L360 240 V252 L355 249 Z" fill="none" stroke="#c04040"/><path d="M358 242 L362 237 L366 243 V247 H361 V243 Z" fill="#fff" stroke="#3a3aa8" stroke-width="0.9"/><rect x="381.5" y="235.5" width="18" height="17" fill="#e8e8e8" stroke="#aaa"/><path d="M390.5 238 V250 M384 244 H397" stroke="#aaa" stroke-width="0.8"/><path d="M390.5 237 L388.5 239.5 H392.5 Z M390.5 251 L388.5 248.5 H392.5 Z M383 244 L385.5 242 V246 Z M398 244 L395.5 242 V246 Z" fill="#aaa"/><path d="M409 248 L414 243 H432 L427 248 Z M409 252 L414 247 H432 L427 252 Z" fill="#c8c8c8" stroke="#bbb"/><path d="M415 245 L424 236 L426 244 Z" fill="#c8c8c8"/><rect x="21" y="274" width="13" height="12" fill="#b8b8b8" stroke="#999" stroke-width="0.8"/><circle cx="33" cy="270" r="7.5" fill="#b0b0b0" stroke="#999" stroke-width="0.8"/><rect x="26" y="270" width="8" height="8" fill="#a8a8a8"/><rect x="51" y="274" width="13" height="12" fill="#b8b8b8" stroke="#999" stroke-width="0.8"/><circle cx="63" cy="270" r="7.5" fill="none" stroke="#ccc" stroke-width="0.8"/><path d="M56 274 H64 V270" fill="#f8f8f8" stroke="#ccc"/><rect x="81.5" y="274.5" width="13" height="12" fill="none" stroke="#ccc" stroke-width="0.8"/><circle cx="93" cy="270" r="7.5" fill="none" stroke="#ccc" stroke-width="0.8"/><path d="M86 274 H94 V280 Q88 279 86 274 Z" fill="#a8a8a8"/><path d="M126 270 H136 L140 266 H130 Z" fill="#40f0f8"/><path d="M130.5 266.5 V276.5 H140.5 M130.5 276.5 L126.5 280.5" fill="none" stroke="#b0b0b0" stroke-width="1"/><path d="M126.5 270.5 h10 v10 h-10 Z M126.5 270.5 L130.5 266.5 H140.5 V276.5 L136.5 280.5 M136.5 270.5 L140.5 266.5" fill="none" stroke="#333" stroke-width="1.1"/><path d="M122.5 273 V285 M120 275.5 H125" fill="none" stroke="#3a3aa8"/><path d="M122 285.5 H134" stroke="#a03040" stroke-width="1.8"/><circle cx="134" cy="285.5" r="1.6" fill="#a03040"/><path d="M123 284 L126 280" stroke="#40a040" stroke-width="0.8"/><path d="M152 275 L159 268 V280 L152 287 Z" fill="#40f0f8"/><path d="M159.5 268.5 V280.5 H171.5 M159.5 280.5 L152.5 287.5" fill="none" stroke="#b0b0b0" stroke-width="1"/><path d="M152.5 275.5 h12 v12 h-12 Z M152.5 275.5 L159.5 268.5 H171.5 V280.5 L164.5 287.5 M164.5 275.5 L171.5 268.5" fill="none" stroke="#333" stroke-width="1.1"/><path d="M182 275 H194 V287 H182 Z" fill="#40f0f8"/><path d="M189.5 268.5 V280.5 H201.5 M189.5 280.5 L182.5 287.5" fill="none" stroke="#b0b0b0" stroke-width="1"/><path d="M182.5 275.5 h12 v12 h-12 Z M182.5 275.5 L189.5 268.5 H201.5 V280.5 L194.5 287.5 M194.5 275.5 L201.5 268.5" fill="none" stroke="#333" stroke-width="1.1"/><path d="M212 287 H224 L231 280 H219 Z" fill="#40f0f8"/><path d="M219.5 268.5 V280.5 H231.5 M219.5 280.5 L212.5 287.5" fill="none" stroke="#b0b0b0" stroke-width="1"/><path d="M212.5 275.5 h12 v12 h-12 Z M212.5 275.5 L219.5 268.5 H231.5 V280.5 L224.5 287.5 M224.5 275.5 L231.5 268.5" fill="none" stroke="#333" stroke-width="1.1"/><path d="M249 268 H261 V280 H249 Z" fill="#40f0f8"/><path d="M249.5 268.5 V280.5 H261.5 M249.5 280.5 L242.5 287.5" fill="none" stroke="#b0b0b0" stroke-width="1"/><path d="M242.5 275.5 h12 v12 h-12 Z M242.5 275.5 L249.5 268.5 H261.5 V280.5 L254.5 287.5 M254.5 275.5 L261.5 268.5" fill="none" stroke="#333" stroke-width="1.1"/><path d="M284 275 L291 268 V280 L284 287 Z" fill="#40f0f8"/><path d="M279.5 268.5 V280.5 H291.5 M279.5 280.5 L272.5 287.5" fill="none" stroke="#b0b0b0" stroke-width="1"/><path d="M272.5 275.5 h12 v12 h-12 Z M272.5 275.5 L279.5 268.5 H291.5 V280.5 L284.5 287.5 M284.5 275.5 L291.5 268.5" fill="none" stroke="#333" stroke-width="1.1"/><path d="M312.5 277.5 L322.0 272.0 L322.0 283.0 L312.5 288.5 Z" fill="#48c4cc"/><path d="M312.5 277.5 V266.5 M312.5 277.5 L322.0 283.0 M312.5 277.5 L303.0 283.0" stroke="#aaa" stroke-width="0.8"/><path d="M312.5 266.5 L322.0 272.0 L322.0 283.0 L312.5 288.5 L303.0 283.0 L303.0 272.0 Z" fill="none" stroke="#333" stroke-width="1.1"/><path d="M312.5 277.5 V288.5 M312.5 277.5 L322.0 272.0 M312.5 277.5 L303.0 272.0" stroke="#333" stroke-width="1"/><path d="M342.2 277.5 L332.7 272.0 L332.7 283.0 L342.2 288.5 Z" fill="#48c4cc"/><path d="M342.2 277.5 V266.5 M342.2 277.5 L351.7 283.0 M342.2 277.5 L332.7 283.0" stroke="#aaa" stroke-width="0.8"/><path d="M342.2 266.5 L351.7 272.0 L351.7 283.0 L342.2 288.5 L332.7 283.0 L332.7 272.0 Z" fill="none" stroke="#333" stroke-width="1.1"/><path d="M342.2 277.5 V288.5 M342.2 277.5 L351.7 272.0 M342.2 277.5 L332.7 272.0" stroke="#333" stroke-width="1"/><path d="M371.9 266.5 L381.4 272.0 L381.4 283.0 L371.9 277.5 Z" fill="#48c4cc"/><path d="M371.9 277.5 V266.5 M371.9 277.5 L381.4 283.0 M371.9 277.5 L362.4 283.0" stroke="#aaa" stroke-width="0.8"/><path d="M371.9 266.5 L381.4 272.0 L381.4 283.0 L371.9 288.5 L362.4 283.0 L362.4 272.0 Z" fill="none" stroke="#333" stroke-width="1.1"/><path d="M371.9 277.5 V288.5 M371.9 277.5 L381.4 272.0 M371.9 277.5 L362.4 272.0" stroke="#333" stroke-width="1"/><path d="M401.6 266.5 L392.1 272.0 L392.1 283.0 L401.6 277.5 Z" fill="#48c4cc"/><path d="M401.6 277.5 V266.5 M401.6 277.5 L411.1 283.0 M401.6 277.5 L392.1 283.0" stroke="#aaa" stroke-width="0.8"/><path d="M401.6 266.5 L411.1 272.0 L411.1 283.0 L401.6 288.5 L392.1 283.0 L392.1 272.0 Z" fill="none" stroke="#333" stroke-width="1.1"/><path d="M401.6 277.5 V288.5 M401.6 277.5 L411.1 272.0 M401.6 277.5 L392.1 272.0" stroke="#333" stroke-width="1"/><rect x="433.5" y="266.5" width="14" height="16" fill="none" stroke="#a8a8a8"/><rect x="436.5" y="268.5" width="14" height="16" fill="none" stroke="#a8a8a8"/><rect x="439.5" y="270.5" width="13" height="16" fill="none" stroke="#a8a8a8"/><rect x="462.5" y="266.5" width="8" height="9" fill="none" stroke="#a8a8a8"/><rect x="474.5" y="266.5" width="8" height="9" fill="none" stroke="#a8a8a8"/><rect x="462.5" y="278.5" width="8" height="9" fill="none" stroke="#a8a8a8"/><rect x="474.5" y="278.5" width="8" height="9" fill="none" stroke="#a8a8a8"/><circle cx="502.5" cy="270" r="3.5" fill="none" stroke="#a8a8a8"/><circle cx="502.5" cy="284" r="3.5" fill="none" stroke="#a8a8a8"/><circle cx="495.5" cy="277" r="3.5" fill="none" stroke="#a8a8a8"/><circle cx="509.5" cy="277" r="3.5" fill="none" stroke="#a8a8a8"/><rect x="524.5" y="266.5" width="14" height="16" fill="none" stroke="#a8a8a8"/><rect x="527.5" y="268.5" width="14" height="16" fill="none" stroke="#a8a8a8"/><rect x="530.5" y="270.5" width="13" height="16" fill="none" stroke="#a8a8a8"/><rect x="552.5" y="266.5" width="8" height="9" fill="none" stroke="#a8a8a8"/><rect x="564.5" y="266.5" width="8" height="9" fill="none" stroke="#a8a8a8"/><rect x="552.5" y="278.5" width="8" height="9" fill="none" stroke="#a8a8a8"/><rect x="564.5" y="278.5" width="8" height="9" fill="none" stroke="#a8a8a8"/><circle cx="593.5" cy="271" r="4" fill="none" stroke="#a8a8a8"/><circle cx="593.5" cy="283" r="4" fill="none" stroke="#a8a8a8"/><circle cx="587.5" cy="277" r="4" fill="none" stroke="#a8a8a8"/><circle cx="599.5" cy="277" r="4" fill="none" stroke="#a8a8a8"/><path d="M614.5 268 V287.5 H624 L616 279" fill="none" stroke="#ccc"/><path d="M626 287 H635 V268 H632 V282 Z" fill="#a0a0a0" stroke="#888" stroke-width="0.8"/><path d="M654.5 266.5 L664.5 276.5 H654.5 Z" fill="none" stroke="#a8a8a8"/><path d="M643.5 281 L653 290 H643.5 Z" fill="none" stroke="#ccc"/><rect x="644" y="287" width="2" height="2" fill="#999"/><path d="M676 273 L682 267 L691 271 V280 L684 285 H676 Z" fill="#c8c8c8" stroke="#888" stroke-width="0.8"/><path d="M676 273 H684 L691 268" fill="none" stroke="#888" stroke-width="0.8"/><circle cx="33" cy="307" r="7.5" fill="#c8c8c8" stroke="#aaa" stroke-width="0.8"/><circle cx="30" cy="306" r="3" fill="#e8e8e8"/><path d="M19 309 L22 306 H29 V318 L26 321 H19 Z" fill="#e8e8e8" stroke="#999" stroke-width="0.8"/><circle cx="64" cy="307" r="7.5" fill="none" stroke="#ccc" stroke-width="0.8"/><path d="M49 309 L52 306 H59 V318 L56 321 H49 Z" fill="#e8e8e8" stroke="#999" stroke-width="0.8"/><path d="M55 309 H59 V315 Q56 313 55 309" fill="#999"/><circle cx="94" cy="307" r="7.5" fill="none" stroke="#ccc" stroke-width="0.8"/><path d="M79 309 L82 306 H89 V318 L86 321 H79 Z" fill="none" stroke="#ccc" stroke-width="0.8"/><rect x="84" y="308" width="6" height="8" fill="none" stroke="#aaa"/><circle cx="118.5" cy="311" r="10" fill="#c0c0c0"/><path d="M108.5 311 A10 10 0 0 1 126 304 L111 318 Z" fill="#e0e0e0"/><path d="M111 301 L129 319 M109 303 L127 321" stroke="#fff" stroke-width="1.3"/><path d="M151 307 H164 L169 302 H156 Z" fill="#c8c8c8"/><path d="M156.5 302.5 V315.5 H169.5 M156.5 315.5 L151.5 320.5" fill="none" stroke="#b0b0b0" stroke-width="1"/><path d="M151.5 307.5 h13 v13 h-13 Z M151.5 307.5 L156.5 302.5 H169.5 V315.5 L164.5 320.5 M164.5 307.5 L169.5 302.5" fill="none" stroke="#333" stroke-width="1.1"/><rect x="150.5" y="318.5" width="3" height="3" fill="#fff" stroke="#4444cc" stroke-width="1"/><rect x="167.5" y="301.0" width="3" height="3" fill="#fff" stroke="#4444cc" stroke-width="1"/><rect x="167.5" y="313.5" width="3" height="3" fill="#fff" stroke="#4444cc" stroke-width="1"/><path d="M186 308 L190 304 H198 V314 L194 318 H186 Z" fill="#909090" stroke="#333" stroke-width="0.8"/><path d="M186 308 H194 L198 304 M194 308 V318" fill="none" stroke="#333" stroke-width="0.8"/><rect x="184.5" y="310.5" width="3" height="3" fill="#fff" stroke="#4444cc" stroke-width="1"/><rect x="192.5" y="316.5" width="3" height="3" fill="#fff" stroke="#4444cc" stroke-width="1"/><rect x="197.0" y="306.5" width="3" height="3" fill="#fff" stroke="#4444cc" stroke-width="1"/><rect x="197.0" y="312.5" width="3" height="3" fill="#fff" stroke="#4444cc" stroke-width="1"/><circle cx="222" cy="311.5" r="10.5" fill="#a0a0a0" stroke="#333"/><ellipse cx="220" cy="312" rx="5.5" ry="5" fill="#e8e8e8"/><rect x="219.5" y="310.0" width="3" height="3" fill="#fff" stroke="#4444cc" stroke-width="1"/><rect x="229.5" y="310.0" width="3" height="3" fill="#fff" stroke="#4444cc" stroke-width="1"/><path d="M242 303 Q249 297 257 303 Q262 310 259 318 Z" fill="#a0a0a0" stroke="#333"/><path d="M245 306 Q250 304 254 308 Q254 313 250 314 Z" fill="#e8e8e8"/><rect x="241.0" y="302.5" width="3" height="3" fill="#fff" stroke="#4444cc" stroke-width="1"/><rect x="248.5" y="309.5" width="3" height="3" fill="#fff" stroke="#4444cc" stroke-width="1"/><path d="M288.5 301 L272 318 Q280 322 289 318 Z" fill="#c0c0c0" stroke="#333" stroke-width="0.8"/><path d="M272 318 Q280 322 289 318" fill="none" stroke="#3a3aa8" stroke-width="1.1"/><path d="M276 313 H288" stroke="#30c0c0" stroke-width="0.8"/><rect x="287.5" y="299.5" width="3" height="3" fill="#fff" stroke="#4444cc" stroke-width="1"/><path d="M306 307 L311 302 H318 L319.5 316 L314 320 H304 Z" fill="#f4f4f4" stroke="#bbb"/><path d="M334 313 L339 304 L348 307 L345 318 L338 319 Z" fill="#f4f4f4" stroke="#bbb"/><path d="M367 304 Q372 301 378 305 H372 Q366 306 370 309 H380 M367 312 H377 Q381 314 377 316 H368 M369 309 Q366 312 369 313" fill="none" stroke="#222" stroke-width="1.4"/><path d="M394 315 L399 304 H407 L402 315 Z" fill="#f4f4f4" stroke="#bbb"/><rect x="405" y="302" width="3" height="3" fill="#fff" stroke="#bbb" stroke-width="0.8"/><path d="M421 301 V310 Q424 312 421 314 V322 M428 311 H433" fill="none" stroke="#aaa"/><path d="M434 301 H441 V308 Q441 312 438 313 V321 H441 M438 321 H435 M434 301 V308 Q434 312 437 313" fill="#c8c8c8" stroke="#999" stroke-width="0.8"/><path d="M433 311 L431 309 V313 Z" fill="#aaa"/><ellipse cx="461.5" cy="306" rx="6.5" ry="3" fill="#e8e8e8" stroke="#333" stroke-width="0.9"/><path d="M455 306 V315 Q461 320 468 315 V306" fill="#c8c8c8" stroke="#333" stroke-width="0.9"/><rect x="465.5" y="307.5" width="3" height="3" fill="#fff" stroke="#4444cc" stroke-width="1"/><rect x="465.5" y="312.5" width="3" height="3" fill="#fff" stroke="#4444cc" stroke-width="1"/><rect x="461.5" y="314.5" width="3" height="3" fill="#fff" stroke="#4444cc" stroke-width="1"/><ellipse cx="492.5" cy="306" rx="6.5" ry="3" fill="#e8e8e8" stroke="#333" stroke-width="0.9"/><path d="M486 306 V315 Q492 320 499 315 V306" fill="#909090" stroke="#333" stroke-width="0.9"/><rect x="489" y="310" width="7" height="6" fill="#c8c8c8"/><rect x="496.5" y="307.5" width="3" height="3" fill="#fff" stroke="#4444cc" stroke-width="1"/><rect x="496.5" y="312.5" width="3" height="3" fill="#fff" stroke="#4444cc" stroke-width="1"/><rect x="492.5" y="314.5" width="3" height="3" fill="#fff" stroke="#4444cc" stroke-width="1"/><path d="M517 304 H526 L530 308 V315 L526 319 H517 L513 315 V308 Z" fill="#c0c0c0" stroke="#333" stroke-width="0.9"/><circle cx="521.5" cy="311.5" r="3.5" fill="#fff" stroke="#333"/><circle cx="521.5" cy="311.5" r="1.2" fill="#666"/><rect x="541.5" y="301.5" width="21" height="20" fill="none" stroke="#222" stroke-width="1.2"/><path d="M546.8 301.5 V321.5 M541.5 306.5 H562.5" stroke="#222"/><path d="M552.0 301.5 V321.5 M541.5 311.5 H562.5" stroke="#222"/><path d="M557.2 301.5 V321.5 M541.5 316.5 H562.5" stroke="#222"/><rect x="540.0" y="300.0" width="3" height="3" fill="#fff" stroke="#4444cc" stroke-width="1"/><rect x="561.0" y="320.0" width="3" height="3" fill="#fff" stroke="#4444cc" stroke-width="1"/><path d="M573 304 V320 H589 Z" fill="#c0c0c0" stroke="#333" stroke-width="0.9"/><path d="M573 304 L583 308 L590 316" fill="none" stroke="#333" stroke-width="0.8"/><rect x="571.5" y="302.5" width="3" height="3" fill="#fff" stroke="#4444cc" stroke-width="1"/><rect x="571.5" y="318.5" width="3" height="3" fill="#fff" stroke="#4444cc" stroke-width="1"/><rect x="588.5" y="314.5" width="3" height="3" fill="#fff" stroke="#4444cc" stroke-width="1"/><rect x="604.5" y="304.5" width="14" height="13" fill="#f4f4f4" stroke="#bbb"/><path d="M604.5 304.5 L608 301 H621 V314 L618 317.5 M604.5 311 H618 M607 313 L616 306" fill="none" stroke="#bbb"/><path d="M641.4 302.4 L650.4 311.4 L642.4 319.6 H632.4" fill="none" stroke="#333" stroke-width="0.9"/><rect x="639.9" y="300.9" width="3" height="3" fill="#fff" stroke="#4444cc" stroke-width="1"/><rect x="648.9" y="309.9" width="3" height="3" fill="#fff" stroke="#4444cc" stroke-width="1"/><rect x="630.9" y="318.1" width="3" height="3" fill="#fff" stroke="#4444cc" stroke-width="1"/><rect x="640.9" y="318.1" width="3" height="3" fill="#fff" stroke="#4444cc" stroke-width="1"/><path d="M661.5 319.3 Q664 304 671 304 Q678 304 681.5 319.5" fill="none" stroke="#333" stroke-width="0.9"/><rect x="663.0" y="300.9" width="3" height="3" fill="#fff" stroke="#4444cc" stroke-width="1"/><rect x="677.0" y="300.9" width="3" height="3" fill="#fff" stroke="#4444cc" stroke-width="1"/><rect x="660.0" y="317.8" width="3" height="3" fill="#fff" stroke="#4444cc" stroke-width="1"/><rect x="680.0" y="318.0" width="3" height="3" fill="#fff" stroke="#4444cc" stroke-width="1"/><path d="M699.5 307.5 Q703 300 706 301 Q709 301 711.5 303.5 M699.5 307.5 Q703 310 704.5 316" fill="none" stroke="#333" stroke-width="0.9"/><rect x="698.0" y="306.0" width="3" height="3" fill="#fff" stroke="#4444cc" stroke-width="1"/><rect x="710.0" y="302.0" width="3" height="3" fill="#fff" stroke="#4444cc" stroke-width="1"/><rect x="703.0" y="314.5" width="3" height="3" fill="#fff" stroke="#4444cc" stroke-width="1"/><rect x="733" y="300" width="20" height="23" rx="2" fill="#b06848" stroke="#7a4a30"/><rect x="751" y="302" width="4" height="19" fill="#f4f4f4" stroke="#bbb" stroke-width="0.7"/><circle cx="742" cy="311" r="4.5" fill="none" stroke="#fff" stroke-width="1.2"/><path d="M731 305 h4 M731 310 h4 M731 315 h4" stroke="#555"/><rect x="763" y="305" width="21" height="15" fill="#f0d850" stroke="#c8a830" stroke-width="0.8"/><path d="M763 305 L773.5 313 L784 305" fill="none" stroke="#c8a830"/><path d="M780 298 L775 303 H778 V311 H782 V303 H785 Z" fill="#40b040"/></svg>
<div class="t" style="left:630.5px;top:304.7px;font-size:11px;line-height:11px;color:#222;transform:scaleX(0.818);transform-origin:left;">3D</div>
<div class="t" style="left:666.5px;top:311.7px;font-size:11px;line-height:11px;color:#222;transform:scaleX(0.818);transform-origin:left;">3D</div>
<div class="t" style="left:690.5px;top:312.2px;font-size:11px;line-height:11px;color:#222;transform:scaleX(0.818);transform-origin:left;">3D</div>
<svg style="left:0px;top:0px" width="1366" height="768" viewBox="0 0 1366 768"><rect x="28.3" y="334.5" width="4.4" height="5" fill="#9a9a9a" transform="rotate(0 30.5 345.5)"/><rect x="28.3" y="334.5" width="4.4" height="5" fill="#9a9a9a" transform="rotate(45 30.5 345.5)"/><rect x="28.3" y="334.5" width="4.4" height="5" fill="#9a9a9a" transform="rotate(90 30.5 345.5)"/><rect x="28.3" y="334.5" width="4.4" height="5" fill="#9a9a9a" transform="rotate(135 30.5 345.5)"/><rect x="28.3" y="334.5" width="4.4" height="5" fill="#9a9a9a" transform="rotate(180 30.5 345.5)"/><rect x="28.3" y="334.5" width="4.4" height="5" fill="#9a9a9a" transform="rotate(225 30.5 345.5)"/><rect x="28.3" y="334.5" width="4.4" height="5" fill="#9a9a9a" transform="rotate(270 30.5 345.5)"/><rect x="28.3" y="334.5" width="4.4" height="5" fill="#9a9a9a" transform="rotate(315 30.5 345.5)"/><circle cx="30.5" cy="345.5" r="7.5" fill="#a8a8a8"/><circle cx="30.5" cy="345.5" r="3" fill="#eee"/><circle cx="30.5" cy="345.5" r="5.5" fill="none" stroke="#ddd" stroke-width="0.8" stroke-dasharray="1.5,1.5"/><path d="M48.5 341 L56 337 L67 341 L59 345 Z M48.5 345 L56 341 L67 345 L59 349 Z M48.5 349 L56 345 L67 349 L59 353 Z" fill="#fff" stroke="#333" stroke-width="0.9"/><path d="M50 341 L56 337 L67 341 L59 345 Z" fill="#999"/><path d="M53 338 Q57 332 63 334 H70 V341 H65 Q60 344 55 341" fill="#fff" stroke="#333" stroke-width="0.9"/><path d="M57 339 L61 336 M59 341 L63 337 M61 342 L65 338" stroke="#333" stroke-width="0.7"/><rect x="70" y="334" width="2" height="8" fill="#3a3aa8"/><path d="M1099 341 L1112 355" stroke="#30c030"/><path d="M1104 348 L1115 337 L1119 341 L1108 352 Z" fill="#fff" stroke="#333"/><path d="M1104 348 L1102 352 L1108 352 Z" fill="#333"/><rect x="1126.5" y="330.5" width="30" height="28" fill="#cce8ff" stroke="#99d1ff"/><ellipse cx="1140" cy="337" rx="7" ry="2.5" fill="none" stroke="#111" stroke-width="1.1"/><path d="M1133 337 Q1133 348 1140 349 Q1147 348 1147 337" fill="none" stroke="#111" stroke-width="1.1"/><path d="M1147 339 Q1152 339 1150 343 Q1148 346 1145 346" fill="none" stroke="#111"/><ellipse cx="1140" cy="350" rx="11" ry="3.5" fill="none" stroke="#111" stroke-width="1.1"/><path d="M1135 344 Q1140 346 1145 344" stroke="#111" fill="none" stroke-width="0.8"/><path d="M1153 358 L1157 354 L1157 358 Z" fill="#000"/><rect x="1338" y="366" width="2" height="2" fill="#b4b4b4"/><rect x="1342" y="366" width="2" height="2" fill="#b4b4b4"/><rect x="1346" y="366" width="2" height="2" fill="#b4b4b4"/><path d="M1345.5 378.5 V395.5 H1349" fill="none" stroke="#b8b8b8"/><path d="M1345.5 388.5 H1348" stroke="#b8b8b8"/><rect x="1341" y="403" width="8" height="1" fill="#909090"/><path d="M1342 421 L1349 414 M1342 427 L1349 420" stroke="#b0b0b0"/><rect x="1347" y="451" width="2" height="7" fill="#a0a0a0"/><rect x="1341" y="469" width="8" height="1" fill="#909090"/><rect x="1348" y="480" width="1" height="7" fill="#a0a0a0"/><path d="M1346.5 520 V526.5 H1349" fill="none" stroke="#b0b0b0"/><rect x="1341" y="535" width="8" height="1" fill="#909090"/><rect x="1344.5" y="545.5" width="5" height="9" fill="#c8c8c8" stroke="#888"/><rect x="1347" y="554" width="1" height="6" fill="#888"/><rect x="1341" y="572" width="8" height="1" fill="#909090"/><path d="M1345.5 586 V600 H1349 M1345.5 590 H1349 M1345.5 595 H1349" fill="none" stroke="#a0a0a0"/><path d="M1346 630 V620 L1349 616 M1346 624 H1349" fill="none" stroke="#c0c0c0"/><path d="M1343.5 661 V651 L1347 647 H1349 M1343.5 651 H1349" fill="none" stroke="#999"/><path d="M1349 670 L1344 676 L1349 682" fill="none" stroke="#b8b8b8" stroke-width="2.2"/></svg>
<svg style="left:0px;top:0px" width="1366" height="768" viewBox="0 0 1366 768"><path d="M17 376 V394 L21 390 L24.5 396 L27 394.5 L24 389 L29 388.5 Z" fill="#f4f4f4" stroke="#909090" stroke-width="1"/><path d="M33 404 L37 400 L37 404 Z" fill="#000"/><path d="M13 428 Q13 414 24 410" fill="none" stroke="#a0a0a0"/><rect x="17" y="413" width="5" height="5" fill="#a0a0a0"/><path d="M23 414 V428 L26 425 L28.5 430 L30 429 L28 424 L31 423.5 Z" fill="#f4f4f4" stroke="#909090"/><rect x="7.5" y="432.5" width="29" height="28" fill="#cce4f7" stroke="#99c9ef"/><path d="M10 459 L35 435" stroke="#666" stroke-dasharray="2,2"/><rect x="15.0" y="450.5" width="3" height="3" fill="#fff" stroke="#4444cc" stroke-width="1"/><rect x="25.0" y="441.0" width="3" height="3" fill="#fff" stroke="#4444cc" stroke-width="1"/><path d="M33 462 L37 458 L37 462 Z" fill="#000"/><path d="M13 487 L31 470" stroke="#222"/><rect x="11.5" y="486.5" width="3" height="3" fill="#fff" stroke="#4444cc" stroke-width="1"/><rect x="29.5" y="467.5" width="3" height="3" fill="#fff" stroke="#4444cc" stroke-width="1"/><path d="M33 492 L37 488 L37 492 Z" fill="#000"/><circle cx="21.5" cy="507.5" r="10" fill="none" stroke="#222"/><rect x="20.0" y="506.0" width="3" height="3" fill="#fff" stroke="#4444cc" stroke-width="1"/><rect x="30.0" y="506.0" width="3" height="3" fill="#fff" stroke="#4444cc" stroke-width="1"/><path d="M33 522 L37 518 L37 522 Z" fill="#000"/><path d="M11.5 545 Q21 519 31.5 545" fill="none" stroke="#222"/><rect x="13.0" y="527.0" width="3" height="3" fill="#fff" stroke="#4444cc" stroke-width="1"/><rect x="27.0" y="527.0" width="3" height="3" fill="#fff" stroke="#4444cc" stroke-width="1"/><rect x="10.0" y="543.5" width="3" height="3" fill="#fff" stroke="#4444cc" stroke-width="1"/><rect x="30.0" y="543.5" width="3" height="3" fill="#fff" stroke="#4444cc" stroke-width="1"/><path d="M33 552.5 L37 548.5 L37 552.5 Z" fill="#000"/><circle cx="22" cy="566" r="2.2" fill="#333"/><path d="M33 582 L37 578 L37 582 Z" fill="#000"/><path d="M33 612 L37 608 L37 612 Z" fill="#000"/><rect x="12.5" y="617.5" width="9" height="9" fill="#f8e0e0" stroke="#333"/><path d="M20 621 L15 624 M15 621 V624 H18" fill="none" stroke="#e04060"/><path d="M15 620 Q24 616 26 627" fill="none" stroke="#e04060"/><rect x="17" y="627" width="15" height="11" fill="#3a3af0"/><path d="M19 636 L28 628" stroke="#e04060"/><path d="M33 642 L37 638 L37 642 Z" fill="#000"/><rect x="9" y="644" width="26" height="1" fill="#909090"/><path d="M21 654 L30.5 663 L22 671 H12.5" fill="none" stroke="#333" stroke-width="0.8"/><rect x="19.5" y="652.5" width="3" height="3" fill="#fff" stroke="#4444cc" stroke-width="1"/><rect x="29.0" y="661.5" width="3" height="3" fill="#fff" stroke="#4444cc" stroke-width="1"/><rect x="11.0" y="669.5" width="3" height="3" fill="#fff" stroke="#4444cc" stroke-width="1"/><rect x="20.5" y="669.5" width="3" height="3" fill="#fff" stroke="#4444cc" stroke-width="1"/><path d="M33 678 L37 674 L37 678 Z" fill="#000"/><rect x="18" y="683" width="8" height="2" fill="#555"/></svg>
<div class="t" style="left:11.5px;top:585.3px;font-size:25px;line-height:25px;color:#4a4a4a;transform:scaleX(1.259);transform-origin:left;font-family:'Liberation Serif',serif;">A</div>
<div class="t" style="left:11.0px;top:658.0px;font-size:10px;line-height:10px;color:#333;transform:scaleX(0.900);transform-origin:left;">3D</div>
<div style="left:38px;top:433px;width:124px;height:148px;background:#f0f0f0;border:1px solid #b0b0b0;box-sizing:border-box;box-shadow:2px 2px 2px rgba(0,0,0,0.35)"></div>
<div style="left:39px;top:436px;width:121px;height:6px;background:#b8c4d0"></div>
<svg style="left:0px;top:0px" width="1366" height="768" viewBox="0 0 1366 768"><rect x="39.5" y="442.5" width="25" height="29" fill="#cce4f7" stroke="#99c9ef"/><path d="M41 471 L64 447" stroke="#666" stroke-dasharray="2,2"/><rect x="46.5" y="463.0" width="3" height="3" fill="#fff" stroke="#4444cc" stroke-width="1"/><rect x="57.0" y="453.0" width="3" height="3" fill="#fff" stroke="#4444cc" stroke-width="1"/><path d="M73 459.5 H96" stroke="#777" stroke-dasharray="2,2"/><rect x="82.0" y="458.0" width="3" height="3" fill="#fff" stroke="#4444cc" stroke-width="1"/><path d="M113.5 448 V471" stroke="#777" stroke-dasharray="2,2"/><rect x="112.0" y="458.0" width="3" height="3" fill="#fff" stroke="#4444cc" stroke-width="1"/><path d="M132 470 L155 448 M136 474 L158 452" stroke="#777" stroke-dasharray="2,2"/><rect x="138.0" y="455.0" width="3" height="3" fill="#fff" stroke="#4444cc" stroke-width="1"/><rect x="143.0" y="459.5" width="3" height="3" fill="#fff" stroke="#4444cc" stroke-width="1"/><path d="M44 495 L56 482 L66 499" stroke="#888" fill="none" stroke-dasharray="2,2"/><path d="M56.5 478 V494" stroke="#333"/><rect x="49.0" y="483.5" width="3" height="3" fill="#fff" stroke="#4444cc" stroke-width="1"/><rect x="55.0" y="483.5" width="3" height="3" fill="#fff" stroke="#4444cc" stroke-width="1"/><rect x="60.0" y="494.5" width="3" height="3" fill="#fff" stroke="#4444cc" stroke-width="1"/><path d="M72 482 L82.5 489.5 L94 480" stroke="#888" fill="none" stroke-dasharray="2,2"/><rect x="81.0" y="488.0" width="3" height="3" fill="#fff" stroke="#4444cc" stroke-width="1"/><rect x="89.0" y="479.5" width="3" height="3" fill="#fff" stroke="#333" stroke-width="1"/><rect x="73.0" y="495.5" width="3" height="3" fill="#fff" stroke="#333" stroke-width="1"/><path d="M104 489.5 H123 M120 487 L123 489.5 L120 492" stroke="#333" fill="none"/><rect x="112.0" y="488.0" width="3" height="3" fill="#fff" stroke="#4444cc" stroke-width="1"/><path d="M137 496 L156 481 M137 496 L141 495 M137 496 L138 492 M156 481 L152 482 M156 481 L155 485" stroke="#333" fill="none"/><path d="M141 500 L159 486" stroke="#999" stroke-dasharray="2,2"/><rect x="142.0" y="486.5" width="3" height="3" fill="#fff" stroke="#4444cc" stroke-width="1"/><rect x="147.0" y="490.5" width="3" height="3" fill="#fff" stroke="#d04040" stroke-width="1"/><rect x="45" y="507" width="112" height="1" fill="#8a8a8a"/><rect x="45" y="543" width="112" height="1" fill="#8a8a8a"/><circle cx="54" cy="525" r="10.5" fill="none" stroke="#999" stroke-dasharray="2,2"/><circle cx="84.5" cy="525" r="10.5" fill="none" stroke="#999" stroke-dasharray="2,2"/><circle cx="114.5" cy="525" r="10.5" fill="none" stroke="#999" stroke-dasharray="2,2"/><rect x="52.0" y="523.5" width="3" height="3" fill="#fff" stroke="#4444cc" stroke-width="1"/><rect x="62.0" y="523.5" width="3" height="3" fill="#fff" stroke="#4444cc" stroke-width="1"/><rect x="73.0" y="523.5" width="3" height="3" fill="#fff" stroke="#4444cc" stroke-width="1"/><rect x="93.0" y="523.5" width="3" height="3" fill="#fff" stroke="#4444cc" stroke-width="1"/><rect x="106.0" y="516.0" width="3" height="3" fill="#fff" stroke="#4444cc" stroke-width="1"/><rect x="120.0" y="516.0" width="3" height="3" fill="#fff" stroke="#4444cc" stroke-width="1"/><rect x="113.0" y="533.5" width="3" height="3" fill="#fff" stroke="#4444cc" stroke-width="1"/><circle cx="144.5" cy="525" r="10.5" fill="none" stroke="#222"/><path d="M136 533 L152 517" stroke="#222"/><path d="M153.5 525.0 L155.5 525.0" stroke="#222"/><path d="M152.3 529.5 L154.0 530.5" stroke="#222"/><path d="M149.0 532.8 L150.0 534.5" stroke="#222"/><path d="M144.5 534.0 L144.5 536.0" stroke="#222"/><path d="M140.0 532.8 L139.0 534.5" stroke="#222"/><path d="M136.7 529.5 L135.0 530.5" stroke="#222"/><path d="M135.5 525.0 L133.5 525.0" stroke="#222"/><path d="M136.7 520.5 L135.0 519.5" stroke="#222"/><path d="M140.0 517.2 L139.0 515.5" stroke="#222"/><path d="M144.5 516.0 L144.5 514.0" stroke="#222"/><path d="M149.0 517.2 L150.0 515.5" stroke="#222"/><path d="M152.3 520.5 L154.0 519.5" stroke="#222"/><rect x="143.0" y="523.5" width="3" height="3" fill="#fff" stroke="#4444cc" stroke-width="1"/><rect x="149.0" y="516.0" width="3" height="3" fill="#fff" stroke="#333" stroke-width="1"/><rect x="134.5" y="531.5" width="3" height="3" fill="#fff" stroke="#333" stroke-width="1"/><path d="M46 570 L62 552" stroke="#888" stroke-dasharray="2,2"/><rect x="45.0" y="566.5" width="3" height="3" fill="#fff" stroke="#4444cc" stroke-width="1"/><rect x="50.5" y="559.5" width="3" height="3" fill="#fff" stroke="#4444cc" stroke-width="1"/><path d="M83.5 550 V569" stroke="#888" stroke-dasharray="2,2"/><rect x="82.0" y="567.5" width="3" height="3" fill="#fff" stroke="#4444cc" stroke-width="1"/><path d="M104 561 H123" stroke="#888" stroke-dasharray="2,2"/><rect x="103.0" y="559.5" width="3" height="3" fill="#fff" stroke="#4444cc" stroke-width="1"/><ellipse cx="82.2" cy="455.2" rx="16.5" ry="38.9" fill="none" stroke="#e8141c" stroke-width="4.6"/><ellipse cx="116.1" cy="457.9" rx="13.4" ry="42.6" fill="none" stroke="#e8141c" stroke-width="4.6"/></svg>
<div style="left:1349px;top:138px;width:17px;height:547px;background:#f0f0f0"></div>
<svg style="left:1352px;top:144px;" width="12" height="8" viewBox="0 0 12 8"><path d="M1.5 6.5 L6 2 L10.5 6.5" fill="none" stroke="#606060" stroke-width="1.8"/></svg>
<div style="left:1350px;top:155px;width:15px;height:360px;background:#cdcdcd"></div>
<svg style="left:1352px;top:673px;" width="12" height="8" viewBox="0 0 12 8"><path d="M1.5 1.5 L6 6 L10.5 1.5" fill="none" stroke="#606060" stroke-width="1.8"/></svg>
<div style="left:0px;top:685px;width:1366px;height:17px;background:#f0f0f0"></div>
<svg style="left:3px;top:689px;" width="10" height="10" viewBox="0 0 10 10"><path d="M7 1.5 L2.5 5 L7 8.5" fill="none" stroke="#606060" stroke-width="1.8"/></svg>
<div style="left:17px;top:686px;width:1288px;height:15px;background:#cdcdcd"></div>
<svg style="left:1336px;top:689px;" width="10" height="10" viewBox="0 0 10 10"><path d="M3 1.5 L7.5 5 L3 8.5" fill="none" stroke="#606060" stroke-width="1.8"/></svg>
<div style="left:0px;top:702px;width:1366px;height:26px;background:#f0f0f0"></div>
<div style="left:0px;top:702px;width:1366px;height:1px;background:#e2e2e2"></div>
<div style="left:155px;top:704px;width:1px;height:22px;background:#dcdcdc"></div>
<div style="left:311px;top:704px;width:1px;height:22px;background:#dcdcdc"></div>
<div style="left:467px;top:704px;width:1px;height:22px;background:#dcdcdc"></div>
<div style="left:623px;top:704px;width:1px;height:22px;background:#dcdcdc"></div>
<div style="left:1167px;top:704px;width:1px;height:22px;background:#dcdcdc"></div>
<svg style="left:4px;top:708px;" width="13" height="13" viewBox="0 0 13 13"><path d="M6.5 1 V12 M1 6.5 H12" stroke="#2a3a50" stroke-width="1.2"/><path d="M6.5 0 L4.5 2.5 H8.5 Z M6.5 13 L4.5 10.5 H8.5 Z M0 6.5 L2.5 4.5 V8.5 Z M13 6.5 L10.5 4.5 V8.5 Z" fill="#2a3a50"/></svg>
<svg style="left:161px;top:708px;" width="14" height="14" viewBox="0 0 14 14"><path d="M3 1 V5 M1 3 L3 0.5 L5 3" fill="none" stroke="#2a3a50"/><rect x="4.5" y="3.5" width="8" height="7" fill="none" stroke="#2a3a50" stroke-dasharray="1.5,1"/><path d="M4 12.5 H13 M11 10.5 L13 12.5 L11 14" fill="none" stroke="#2a3a50"/></svg>
<svg style="left:317px;top:708px;" width="14" height="14" viewBox="0 0 14 14"><path d="M3 1 V5 M1 3 L3 0.5 L5 3" fill="none" stroke="#2a3a50"/><rect x="4.5" y="3.5" width="8" height="7" fill="none" stroke="#2a3a50"/><path d="M4 12.5 H13 M11 10.5 L13 12.5 L11 14" fill="none" stroke="#2a3a50"/></svg>
<div class="t" style="left:336.5px;top:709.6px;font-size:11.7px;line-height:12px;color:#1a1a1a;transform:scaleX(0.940);transform-origin:left;">1366 × 768piks.</div>
<div class="t" style="left:1189.0px;top:709.6px;font-size:11.7px;line-height:12px;color:#1a1a1a;transform:scaleX(0.912);transform-origin:left;">100%</div>
<div style="left:1225px;top:708px;width:14px;height:14px;border:1px solid #555;border-radius:50%;box-sizing:border-box"></div>
<div style="left:1228px;top:714.5px;width:8px;height:1.2px;background:#333"></div>
<div style="left:1250px;top:714px;width:86px;height:2px;background:#d8d8d8;border:1px solid #e4e4e4"></div>
<svg style="left:1288px;top:707px;" width="11" height="17" viewBox="0 0 11 17"><path d="M0 0 H11 V12 L5.5 16.5 L0 12 Z" fill="#1479d4"/></svg>
<div style="left:1345px;top:707px;width:16px;height:16px;border:1px solid #555;border-radius:50%;box-sizing:border-box"></div>
<div style="left:1349px;top:714.5px;width:8px;height:1.4px;background:#333"></div>
<div style="left:1352.3px;top:711px;width:1.4px;height:8px;background:#333"></div>
<div style="left:0px;top:728px;width:1366px;height:40px;background:#05060b"></div>
<svg style="left:16px;top:740px;" width="17" height="17" viewBox="0 0 17 17"><path d="M0 2.3 L6.8 1.3 V7.7 H0 Z M7.8 1.1 L17 0 V7.7 H7.8 Z M0 8.7 H6.8 V15.4 L0 14.5 Z M7.8 8.7 H17 V17 L7.8 15.6 Z" fill="#fff"/></svg>
<svg style="left:63px;top:739px;" width="18" height="19" viewBox="0 0 18 19"><circle cx="11" cy="7" r="5.5" fill="none" stroke="#fff" stroke-width="1.3"/><path d="M7 11 L1 17.5" stroke="#fff" stroke-width="1.4"/></svg>
<svg style="left:110px;top:741px;" width="21" height="15" viewBox="0 0 21 15"><rect x="4.5" y="0.5" width="12" height="14" fill="none" stroke="#fff" stroke-width="1.2"/><path d="M2.5 2 H0.6 V12.5 H2.5 M18.5 2 H20.4 V12.5 H18.5" fill="none" stroke="#fff" stroke-width="1.2"/></svg>
<div style="left:391px;top:728px;width:48px;height:40px;background:#3a3a3c"></div>
<div style="left:297px;top:766px;width:40px;height:2px;background:#76b9ed"></div>
<div style="left:346px;top:766px;width:40px;height:2px;background:#76b9ed"></div>
<div style="left:391px;top:766px;width:48px;height:2px;background:#76b9ed"></div>
<svg style="left:159px;top:736px;" width="22" height="23" viewBox="0 0 22 23"><path d="M2.5 13 Q2 4 10 2.5 Q19 1.5 20.5 10 V13.5 H8 Q8.5 19 14 19 Q17.5 19 20 17 V21.5 Q16.5 23 13 23 Q4 22.5 2.5 13 Z M8 10 H15 Q14.5 6 11.5 6 Q8.5 6 8 10 Z" fill="#1d7ad8"/><path d="M1 10 Q4 3 12 3.5 Q6 4 3 10 Z" fill="#1d7ad8"/></svg>
<svg style="left:208px;top:738px;" width="22" height="19" viewBox="0 0 22 19"><path d="M0 2 H8 L10 4 H22 V18 H0 Z" fill="#f8d66a"/><rect x="0" y="6" width="22" height="12" fill="#f4c542"/><rect x="6" y="12" width="10" height="6" fill="#3aa0e0"/><rect x="8" y="14" width="6" height="4" fill="#f4c542"/></svg>
<svg style="left:256px;top:736px;" width="23" height="24" viewBox="0 0 23 24"><path d="M6 7 Q6.5 1 10.5 1 Q14.5 1 15 7 M9 7 Q9.5 2.5 12.5 2.5 Q15.5 3 16 7" fill="none" stroke="#fff" stroke-width="1.2"/><path d="M1 8 L21 6.5 V23 L3 21 Z" fill="#fff"/><path d="M5 11 L10.5 10.5 V15 H5 Z M11.5 10.4 L17 10 V15 H11.5 Z M5 16 H10.5 V20 L5 19.6 Z M11.5 16 H17 V20.6 L11.5 20.2 Z" fill="#05060b"/></svg>
<svg style="left:305px;top:736px;" width="24" height="24" viewBox="0 0 24 24"><circle cx="12" cy="12" r="11" fill="#e85a1c"/><path d="M12 1 A11 11 0 0 1 23 12 A11 11 0 0 1 17 21.5 Q21 15 17 8 Z" fill="#f8b820"/><circle cx="13" cy="10.5" r="6.5" fill="#1a6ac8"/><path d="M3 7 Q1 15 7 20 Q14 24 20 18 Q13 19 9.5 15 Q7 11 11 8.5 Q7 5 3 7 Z" fill="#f4701c"/></svg>
<svg style="left:354px;top:736px;" width="24" height="24" viewBox="0 0 24 24"><circle cx="12" cy="12" r="11.3" fill="#6a6a6a" stroke="#d8d8d8" stroke-width="1.2" stroke-dasharray="1.5,1"/><circle cx="12" cy="12" r="9" fill="#505050"/><text x="12" y="14" font-family="Liberation Sans" font-size="9" font-weight="bold" fill="#f4f4f4" text-anchor="middle">2015</text><rect x="9" y="16" width="6" height="2.5" fill="#ddd"/></svg>
<svg style="left:403px;top:736px;" width="24" height="22" viewBox="0 0 24 22"><ellipse cx="10" cy="13" rx="9.5" ry="7.5" fill="#e8eef6" stroke="#7d9ac2"/><circle cx="6" cy="11" r="2" fill="#e04a3a"/><circle cx="10" cy="9" r="2" fill="#f3b81c"/><circle cx="5" cy="15.5" r="2" fill="#3a9a3a"/><circle cx="10" cy="15" r="1.8" fill="#4a7ac8"/><path d="M16 20 L22 3" stroke="#e58a2a" stroke-width="2.6"/><path d="M21.5 4 L23 0" stroke="#c8a070" stroke-width="2.2"/></svg>
<svg style="left:1172px;top:744px;" width="13" height="8" viewBox="0 0 13 8"><path d="M1 7 L6.5 1.5 L12 7" fill="none" stroke="#fff" stroke-width="1.3"/></svg>
<svg style="left:1193px;top:742px;" width="18" height="12" viewBox="0 0 18 12"><path d="M2 1 V4 M5 1 V4 M1 4 H6 V7 Q6 9 3.5 9 V12" fill="none" stroke="#fff" stroke-width="1.1"/><rect x="5.5" y="3.5" width="11" height="7" fill="none" stroke="#fff"/><rect x="7" y="5" width="5" height="4" fill="#fff"/><rect x="16.5" y="5.5" width="1.5" height="3" fill="#fff"/></svg>
<svg style="left:1220px;top:742px;" width="14" height="14" viewBox="0 0 14 14"><path d="M1 13 Q1 3 12 1.5 M3.5 13 Q3.5 6 12 4.5 M6 13 Q6 8.5 12 7.5" fill="none" stroke="#9a9a9a" stroke-width="1.1"/><rect x="9" y="10" width="3.5" height="3.5" fill="#fff"/></svg>
<svg style="left:1241px;top:740px;" width="18" height="15" viewBox="0 0 18 15"><path d="M1 5 H4 L8 1 V14 L4 10 H1 Z" fill="none" stroke="#fff" stroke-width="1.1"/><path d="M10.5 5 Q12 7.5 10.5 10 M12.5 3 Q15.5 7.5 12.5 12 M14.5 1 Q18.5 7.5 14.5 14" fill="none" stroke="#fff" stroke-width="1.1"/></svg>
<svg style="left:1265px;top:740px;" width="18" height="17" viewBox="0 0 18 17"><path d="M0.6 0.6 H16.4 V12.4 H11 L8.5 15.5 L6 12.4 H0.6 Z" fill="none" stroke="#fff" stroke-width="1.2"/><path d="M3.5 4 H13.5 M3.5 6.5 H13.5 M3.5 9 H10" stroke="#fff" stroke-width="1.1"/></svg>
<div class="t" style="left:1309.0px;top:732.6px;font-size:11.7px;line-height:12px;color:#fff;transform:scaleX(0.866);transform-origin:center;">14:46</div>
<div class="t" style="left:1293.0px;top:749.5px;font-size:11.7px;line-height:12px;color:#fff;transform:scaleX(0.899);transform-origin:center;">28.01.2016</div>
<div style="left:1362px;top:728px;width:1px;height:40px;background:#6a6a6a"></div>
<svg style="left:0px;top:4px;" width="22" height="17" viewBox="0 0 22 17"><ellipse cx="8" cy="10" rx="8" ry="6.5" fill="#e8eef6" stroke="#7d9ac2" stroke-width="1"/>
      <circle cx="5" cy="8" r="1.6" fill="#e04a3a"/><circle cx="8.5" cy="6" r="1.6" fill="#f3b81c"/><circle cx="4" cy="12" r="1.6" fill="#3a9a3a"/><circle cx="8" cy="12" r="1.5" fill="#4a7ac8"/>
      <path d="M13 15 L16 3" stroke="#e58a2a" stroke-width="2.4"/><path d="M15 4 L16 0" stroke="#c8a070" stroke-width="2"/></svg>
<div style="left:23px;top:5px;width:1px;height:12px;background:#a0a0a0"></div>
<svg style="left:34px;top:5px;" width="14" height="14" viewBox="0 0 14 14"><rect x="0" y="0" width="14" height="14" rx="1" fill="#7b5ea8"/><rect x="3" y="1" width="8" height="5" fill="#f0f0f8"/><rect x="4" y="9" width="6" height="5" fill="#c8c8d0"/><rect x="6" y="10" width="2" height="3" fill="#7b5ea8"/></svg>
<svg style="left:56px;top:4px;" width="15" height="16" viewBox="0 0 15 16"><path d="M3 4 Q11 1 12 8 Q12 13 7 15" fill="none" stroke="#2e8ad8" stroke-width="3"/><path d="M0 5 L6 1 L6 9 Z" fill="#2e8ad8"/></svg>
<svg style="left:78px;top:4px;" width="15" height="16" viewBox="0 0 15 16"><path d="M12 4 Q4 1 3 8 Q3 13 8 15" fill="none" stroke="#a8b4c4" stroke-width="3"/><path d="M15 5 L9 1 L9 9 Z" fill="#a8b4c4"/></svg>
<svg style="left:99px;top:9px;" width="9" height="8" viewBox="0 0 9 8"><rect x="0" y="0" width="9" height="1.2" fill="#000"/><path d="M0.5 3 L8.5 3 L4.5 7.5 Z" fill="#000"/></svg>
<div style="left:115px;top:5px;width:1px;height:12px;background:#a0a0a0"></div>
<div class="t" style="left:123.0px;top:5.8px;font-size:11.7px;line-height:12px;color:#000;">Bez tytułu - Paint</div>
<svg style="left:1244px;top:4px;" width="14" height="14" viewBox="0 0 14 14"><rect x="1" y="6" width="11" height="1" fill="#000"/></svg>
<svg style="left:1288px;top:3px;" width="14" height="14" viewBox="0 0 14 14"><rect x="1.5" y="3.5" width="8" height="8" fill="none" stroke="#000"/><path d="M3.5 3.5 V1.5 H11.5 V9.5 H9.5" fill="none" stroke="#000"/></svg>
<svg style="left:1334px;top:3px;" width="14" height="14" viewBox="0 0 14 14"><path d="M1 1 L12 12 M12 1 L1 12" stroke="#000" stroke-width="1.2"/></svg>
<div class="t" style="left:18.8px;top:28.8px;font-size:11.7px;line-height:12px;color:#fff;transform:scaleX(0.905);transform-origin:center;">Plik</div>
<div class="t" style="left:70.0px;top:28.8px;font-size:11.7px;line-height:12px;color:#262626;transform:scaleX(0.959);transform-origin:left;">Narzędzia główne</div>
<div class="t" style="left:191.0px;top:28.8px;font-size:11.7px;line-height:12px;color:#3a3a3a;transform:scaleX(1.020);transform-origin:left;">Widok</div>
<svg style="left:1327px;top:29px;" width="12" height="8" viewBox="0 0 12 8"><path d="M1 6.5 L6 1.5 L11 6.5" fill="none" stroke="#9a9a9a" stroke-width="1.2"/></svg>
<svg style="left:1347px;top:26px;" width="16" height="16" viewBox="0 0 16 16"><circle cx="8" cy="8" r="7.5" fill="#1e6fc4"/><text x="8" y="12.5" font-family="Liberation Sans" font-weight="bold" font-size="12" fill="#fff" text-anchor="middle">?</text></svg>
<div style="left:113px;top:49px;width:1px;height:86px;background:#e2e3e4"></div>
<div style="left:267px;top:49px;width:1px;height:86px;background:#e2e3e4"></div>
<div style="left:347px;top:49px;width:1px;height:86px;background:#e2e3e4"></div>
<div style="left:400px;top:49px;width:1px;height:86px;background:#e2e3e4"></div>
<div style="left:671px;top:49px;width:1px;height:86px;background:#e2e3e4"></div>
<div style="left:728px;top:49px;width:1px;height:86px;background:#e2e3e4"></div>
<div style="left:1085px;top:49px;width:1px;height:86px;background:#e2e3e4"></div>
<div class="t" style="left:31.7px;top:122.8px;font-size:11.7px;line-height:12px;color:#8c8c8c;transform:scaleX(0.945);transform-origin:center;">Schowek</div>
<div class="t" style="left:173.7px;top:122.8px;font-size:11.7px;line-height:12px;color:#8c8c8c;transform:scaleX(0.949);transform-origin:center;">Obraz</div>
<div class="t" style="left:279.0px;top:122.8px;font-size:11.7px;line-height:12px;color:#8c8c8c;transform:scaleX(0.926);transform-origin:center;">Narzędzia</div>
<div class="t" style="left:514.0px;top:122.8px;font-size:11.7px;line-height:12px;color:#8c8c8c;">Kształty</div>
<div class="t" style="left:889.0px;top:122.8px;font-size:11.7px;line-height:12px;color:#8c8c8c;transform:scaleX(0.970);transform-origin:center;">Kolory</div>
<svg style="left:15px;top:53px;" width="25" height="31" viewBox="0 0 25 31"><rect x="1" y="3" width="23" height="27" rx="2" fill="#b08850" stroke="#8a6a3a"/><rect x="4" y="6" width="17" height="21" fill="#fff"/>
       <g stroke="#c8c8c8" stroke-width="1"><line x1="5" y1="8.0" x2="20" y2="8.0"/><line x1="5" y1="10.2" x2="20" y2="10.2"/><line x1="5" y1="12.4" x2="20" y2="12.4"/><line x1="5" y1="14.6" x2="20" y2="14.6"/><line x1="5" y1="16.8" x2="20" y2="16.8"/><line x1="5" y1="19.0" x2="20" y2="19.0"/><line x1="5" y1="21.2" x2="20" y2="21.2"/><line x1="5" y1="23.4" x2="20" y2="23.4"/><line x1="5" y1="25.6" x2="20" y2="25.6"/></g>
       <rect x="8" y="1" width="9" height="4" rx="1" fill="#505050"/></svg>
<div class="t" style="left:11.8px;top:90.3px;font-size:11.7px;line-height:12px;color:#262626;transform:scaleX(0.989);transform-origin:center;">Wklej</div>
<svg style="left:23px;top:105px;" width="8" height="5" viewBox="0 0 8 5"><path d="M0 0 L7 0 L3.5 4 Z" fill="#000"/></svg>
<svg style="left:53px;top:55px;" width="11" height="14" viewBox="0 0 11 14"><circle cx="3" cy="11" r="2.3" fill="none" stroke="#9aa8bc" stroke-width="1.4"/><circle cx="8" cy="11" r="2.3" fill="none" stroke="#9aa8bc" stroke-width="1.4"/><path d="M1 0 L7 9 M10 0 L4 9" stroke="#9aa8bc" stroke-width="1.4"/></svg>
<div class="t" style="left:70.0px;top:55.8px;font-size:11.7px;line-height:12px;color:#8c8c8c;transform:scaleX(0.983);transform-origin:left;">Wytnij</div>
<svg style="left:51px;top:76px;" width="16" height="16" viewBox="0 0 16 16"><path d="M0.5 0.5 H6 L8 2.5 V11.5 H0.5 Z" fill="#f4f6f8" stroke="#b0bccc"/><path d="M6.5 4.5 H12 L15 7.5 V15.5 H6.5 Z" fill="#f4f6f8" stroke="#9aa8bc"/><path d="M8 9 H13 M8 11 H13 M8 13 H13" stroke="#b0bccc"/></svg>
<div class="t" style="left:70.0px;top:77.8px;font-size:11.7px;line-height:12px;color:#8c8c8c;transform:scaleX(0.959);transform-origin:left;">Kopiuj</div>
<svg style="left:125px;top:58px;" width="31" height="25" viewBox="0 0 31 25"><rect x="0.5" y="0.5" width="29" height="23" fill="none" stroke="#2a5a94" stroke-dasharray="2,2"/></svg>
<div class="t" style="left:117.3px;top:90.3px;font-size:11.7px;line-height:12px;color:#262626;transform:scaleX(0.882);transform-origin:center;">Zaznacz</div>
<svg style="left:136px;top:105px;" width="8" height="5" viewBox="0 0 8 5"><path d="M0 0 L7 0 L3.5 4 Z" fill="#000"/></svg>
<svg style="left:167px;top:55px;" width="14" height="14" viewBox="0 0 14 14"><path d="M3 0 V11 H14 M0 3 H11 V14" fill="none" stroke="#9aa8bc" stroke-width="1.2"/><path d="M3 11 L12 2" stroke="#9aa8bc"/></svg>
<div class="t" style="left:185.0px;top:55.8px;font-size:11.7px;line-height:12px;color:#8c8c8c;transform:scaleX(0.941);transform-origin:left;">Przytnij</div>
<svg style="left:168px;top:77px;" width="14" height="14" viewBox="0 0 14 14"><rect x="4.5" y="0.5" width="9" height="8" fill="#e8f0f8" stroke="#2a6ab0"/><rect x="0.5" y="7.5" width="6" height="5" fill="#f5f6f7" stroke="#2a6ab0"/></svg>
<div class="t" style="left:185.0px;top:77.8px;font-size:11.7px;line-height:12px;color:#262626;transform:scaleX(0.939);transform-origin:left;">Zmień rozmiar</div>
<svg style="left:166px;top:99px;" width="17" height="14" viewBox="0 0 17 14"><defs><linearGradient id="gg" x1="0" x2="1"><stop offset="0" stop-color="#f0f0f0"/><stop offset="1" stop-color="#7a7a7a"/></linearGradient></defs><path d="M0 12.5 L10 5.5 V12.5 Z" fill="url(#gg)"/><path d="M10 2 V12.5 H15.5 Z" fill="#2a7ad0"/><path d="M5 7 Q5.5 2.5 8.5 1.8" fill="none" stroke="#2a7ad0" stroke-width="1.3"/><path d="M7.5 0 L10 1.8 L7.5 3.8 Z" fill="#2a7ad0"/></svg>
<div class="t" style="left:185.0px;top:99.8px;font-size:11.7px;line-height:12px;color:#262626;transform:scaleX(0.979);transform-origin:left;">Obróć</div>
<svg style="left:220px;top:104px;" width="7" height="5" viewBox="0 0 7 5"><path d="M0 0 L7 0 L3.5 4 Z" fill="#000"/></svg>
<svg style="left:275px;top:62px;" width="17" height="17" viewBox="0 0 17 17"><path d="M2 15 L13 4 L15 6 L4 17 Z" fill="#f0c848" stroke="#8a7030" stroke-width="0.8"/><path d="M13 4 L15 2 L17 4 L15 6 Z" fill="#e06060"/><path d="M1 16 L2 15 L3 16 Z" fill="#333"/></svg>
<svg style="left:298px;top:61px;" width="18" height="18" viewBox="0 0 18 18"><path d="M6 4 L14 8 L10 17 L2 13 Z" fill="#cfe2f6" stroke="#4a7ab0"/><path d="M7 3 Q8 0 10 3 L9 9" fill="none" stroke="#666"/><path d="M0 12 Q1 6 5 7 L2 14 Z" fill="#e05020"/></svg>
<div class="t" style="left:325.0px;top:61.8px;font-size:18px;line-height:18px;color:#1a3a6a;transform:scaleX(1.166);transform-origin:center;font-family:'Liberation Serif',serif;font-weight:bold;">A</div>
<svg style="left:275px;top:91px;" width="17" height="16" viewBox="0 0 17 16"><path d="M1 9 L9 2 L16 7 L8 14 Z" fill="#f4a0a0" stroke="#c06060" stroke-width="0.8"/><path d="M1 9 L1 11 L8 16 L8 14 Z" fill="#e08080"/></svg>
<svg style="left:299px;top:90px;" width="17" height="17" viewBox="0 0 17 17"><path d="M2 15 L9 8 L11 10 L4 17 Z" fill="#f0f0f0" stroke="#888" stroke-width="0.8"/><path d="M9 5 L13 1 L16 4 L12 8 Z" fill="#2a6ab8"/><path d="M8 6 L12 10" stroke="#2a6ab8" stroke-width="2"/></svg>
<svg style="left:322px;top:90px;" width="16" height="17" viewBox="0 0 16 17"><circle cx="6" cy="6" r="5" fill="#dde8f4" stroke="#8898a8" stroke-width="1.4"/><path d="M10 10 L15 15" stroke="#8a6a3a" stroke-width="2.4"/></svg>
<svg style="left:357px;top:54px;" width="33" height="32" viewBox="0 0 33 32"><defs><linearGradient id="hb" x1="0" y1="0" x2="1" y2="1"><stop offset="0" stop-color="#e8ecf0"/><stop offset="1" stop-color="#5a6a80"/></linearGradient></defs><rect x="0.5" y="0.5" width="31" height="31" fill="#f0f4f8" stroke="#8a8a8a"/>
       <path d="M12.5 8 Q4 10 2.5 18 Q2 27 11 30.5 L16 30.5 L15 26 Q8 25 6 19 Q6 12 13 8.5 Z" fill="#ec6428"/>
       <path d="M20 18 L31 5 L31 10 L24 21 Z" fill="url(#hb)"/><path d="M21 16 L31 3.5" stroke="#333" stroke-width="0.8"/>
       <ellipse cx="18" cy="22.5" rx="7.5" ry="5.5" fill="#a07838" transform="rotate(-50 18 22.5)"/></svg>
<div class="t" style="left:354.2px;top:90.3px;font-size:11.7px;line-height:12px;color:#262626;transform:scaleX(0.872);transform-origin:center;">Pędzle</div>
<svg style="left:369px;top:105px;" width="8" height="5" viewBox="0 0 8 5"><path d="M0 0 L7 0 L3.5 4 Z" fill="#000"/></svg>
<div style="left:406px;top:54px;width:157px;height:60px;background:#fff;border:1px solid #dadbdc;box-sizing:border-box"></div>
<div style="left:548px;top:55px;width:1px;height:58px;background:#e8e8e8"></div>
<div style="left:447px;top:54px;width:20px;height:20px;background:#c9e0f7;border:1px solid #8ab8e6;box-sizing:border-box"></div>
<svg style="left:0;top:0" width="1" height="1"><defs><linearGradient id="sgr" x1="0" y1="0" x2="1" y2="1"><stop offset="0" stop-color="#ffffff"/><stop offset="1" stop-color="#c8dcf0"/></linearGradient></defs></svg>
<svg style="left:408px;top:55px;" width="18" height="18" viewBox="0 0 18 18"><path d="M2 3 L16 14" stroke="#2d6aa6" stroke-width="1.2"/></svg>
<svg style="left:428px;top:55px;" width="18" height="18" viewBox="0 0 18 18"><path d="M2 15 Q5 2 9 10 Q12 16 16 3" fill="none" stroke="#2d6aa6" stroke-width="1.2"/></svg>
<svg style="left:448px;top:55px;" width="18" height="18" viewBox="0 0 18 18"><ellipse cx="9" cy="9" rx="7.5" ry="5.5" fill="url(#sgr)" stroke="#2d6aa6" stroke-width="1.2"/></svg>
<svg style="left:468px;top:55px;" width="18" height="18" viewBox="0 0 18 18"><rect x="2" y="3.5" width="14" height="11" fill="url(#sgr)" stroke="#2d6aa6" stroke-width="1.2"/></svg>
<svg style="left:488px;top:55px;" width="18" height="18" viewBox="0 0 18 18"><rect x="2" y="3.5" width="14" height="11" rx="3" fill="url(#sgr)" stroke="#2d6aa6" stroke-width="1.2"/></svg>
<svg style="left:508px;top:55px;" width="18" height="18" viewBox="0 0 18 18"><path d="M2 14.5 L5.5 3.5 H13 L11 9 H16 V14.5 Z" fill="url(#sgr)" stroke="#2d6aa6" stroke-width="1.2"/></svg>
<svg style="left:528px;top:55px;" width="18" height="18" viewBox="0 0 18 18"><path d="M9 3 L16 15 H2 Z" fill="url(#sgr)" stroke="#2d6aa6" stroke-width="1.2"/></svg>
<svg style="left:408px;top:75px;" width="18" height="18" viewBox="0 0 18 18"><path d="M2 2 L15 15 H2 Z" fill="url(#sgr)" stroke="#2d6aa6" stroke-width="1.2"/></svg>
<svg style="left:428px;top:75px;" width="18" height="18" viewBox="0 0 18 18"><path d="M9 2 L16 9 L9 16 L2 9 Z" fill="url(#sgr)" stroke="#2d6aa6" stroke-width="1.2"/></svg>
<svg style="left:448px;top:75px;" width="18" height="18" viewBox="0 0 18 18"><path d="M9 2 L16 7 L13.5 15 H4.5 L2 7 Z" fill="url(#sgr)" stroke="#2d6aa6" stroke-width="1.2"/></svg>
<svg style="left:468px;top:75px;" width="18" height="18" viewBox="0 0 18 18"><path d="M9 2 L15.5 5.5 V12.5 L9 16 L2.5 12.5 V5.5 Z" fill="url(#sgr)" stroke="#2d6aa6" stroke-width="1.2"/></svg>
<svg style="left:488px;top:75px;" width="18" height="18" viewBox="0 0 18 18"><path d="M2 6 H10 V2 L16 9 L10 16 V12 H2 Z" fill="url(#sgr)" stroke="#2d6aa6" stroke-width="1.2"/></svg>
<svg style="left:508px;top:75px;" width="18" height="18" viewBox="0 0 18 18"><path d="M16 6 H8 V2 L2 9 L8 16 V12 H16 Z" fill="url(#sgr)" stroke="#2d6aa6" stroke-width="1.2"/></svg>
<svg style="left:528px;top:75px;" width="18" height="18" viewBox="0 0 18 18"><path d="M6 16 V9 H2 L9 2 L16 9 H12 V16 Z" fill="url(#sgr)" stroke="#2d6aa6" stroke-width="1.2"/></svg>
<svg style="left:408px;top:95px;" width="18" height="18" viewBox="0 0 18 18"><path d="M6 2 V9 H2 L9 16 L16 9 H12 V2 Z" fill="url(#sgr)" stroke="#2d6aa6" stroke-width="1.2"/></svg>
<svg style="left:428px;top:95px;" width="18" height="18" viewBox="0 0 18 18"><path d="M9 2 L10.5 7.5 L16 9 L10.5 10.5 L9 16 L7.5 10.5 L2 9 L7.5 7.5 Z" fill="url(#sgr)" stroke="#2d6aa6" stroke-width="1.2"/></svg>
<svg style="left:448px;top:95px;" width="18" height="18" viewBox="0 0 18 18"><path d="M9 2 L11 7 H16 L12 10.5 L13.5 16 L9 12.5 L4.5 16 L6 10.5 L2 7 H7 Z" fill="url(#sgr)" stroke="#2d6aa6" stroke-width="1.2"/></svg>
<svg style="left:468px;top:95px;" width="18" height="18" viewBox="0 0 18 18"><path d="M9 1.5 L11 5.5 H15.5 L13 9 L15.5 12.5 H11 L9 16.5 L7 12.5 H2.5 L5 9 L2.5 5.5 H7 Z" fill="url(#sgr)" stroke="#2d6aa6" stroke-width="1.2"/></svg>
<svg style="left:488px;top:95px;" width="18" height="18" viewBox="0 0 18 18"><path d="M2.5 3.5 H15.5 V12 H8 L5 15.5 V12 H2.5 Z" fill="url(#sgr)" stroke="#2d6aa6" stroke-width="1.2"/></svg>
<svg style="left:508px;top:95px;" width="18" height="18" viewBox="0 0 18 18"><path d="M5 13 Q1 11 2 7.5 Q4 3 9 3 Q16 3 16 8 Q16 12 9 12.5 L5 16 Z" fill="url(#sgr)" stroke="#2d6aa6" stroke-width="1.2"/></svg>
<svg style="left:528px;top:95px;" width="18" height="18" viewBox="0 0 18 18"><path d="M4 13 Q1 11 2.5 8 Q1 4 5 4 Q7 1.5 10 3 Q14 2 15 5 Q17 8 15 11 Q14 14 10 13 Q7 15 4 13 Z" fill="url(#sgr)" stroke="#2d6aa6" stroke-width="1.2"/></svg>
<svg style="left:551px;top:61px;" width="10" height="46" viewBox="0 0 10 46"><path d="M1.5 5 L5 1.5 L8.5 5 Z" fill="#c0c0c0"/><path d="M1 21 L9 21 L5 25 Z" fill="#555"/><rect x="1" y="38" width="8" height="1" fill="#555"/><path d="M1 41 L9 41 L5 45 Z" fill="#555"/></svg>
<svg style="left:568px;top:55px;" width="18" height="16" viewBox="0 0 18 16"><path d="M0.5 3.5 V15.5 H11" fill="none" stroke="#2a5a94"/><path d="M2 14 L13 3 L16 6 L5 17 Z" fill="#f0c848" stroke="#8a7030" stroke-width="0.8"/><path d="M13 3 L14.5 1.5 L17 4 L16 6 Z" fill="#e06060"/></svg>
<div class="t" style="left:588.0px;top:55.8px;font-size:11.7px;line-height:12px;color:#262626;">Kontur</div>
<svg style="left:626px;top:59px;" width="7" height="5" viewBox="0 0 7 5"><path d="M0 0 L7 0 L3.5 4 Z" fill="#000"/></svg>
<svg style="left:568px;top:76px;" width="18" height="17" viewBox="0 0 18 17"><path d="M4 4 L11 8 L8 14 L1 10 Z" fill="#cfe2f6" stroke="#4a7ab0"/><rect x="0" y="13" width="18" height="4" fill="#5a9ee0"/><path d="M7 6 Q9 0 11 4" fill="none" stroke="#777"/></svg>
<div class="t" style="left:588.0px;top:77.8px;font-size:11.7px;line-height:12px;color:#262626;transform:scaleX(0.981);transform-origin:left;">Wypełnienie</div>
<svg style="left:655px;top:81px;" width="7" height="5" viewBox="0 0 7 5"><path d="M0 0 L7 0 L3.5 4 Z" fill="#000"/></svg>
<svg style="left:683px;top:54px;" width="32" height="28" viewBox="0 0 32 28"><rect x="0" y="1" width="32" height="1" fill="#1c3a64"/><rect x="0" y="6" width="32" height="2" fill="#1c3a64"/><rect x="0" y="13" width="32" height="4" fill="#1c3a64"/><rect x="0" y="21" width="32" height="7" fill="#1c3a64"/></svg>
<div class="t" style="left:676.2px;top:90.3px;font-size:11.7px;line-height:12px;color:#262626;transform:scaleX(0.918);transform-origin:center;">Rozmiar</div>
<svg style="left:695px;top:105px;" width="8" height="5" viewBox="0 0 8 5"><path d="M0 0 L7 0 L3.5 4 Z" fill="#000"/></svg>
<div style="left:733px;top:51px;width:42px;height:66px;background:#c9e0f7;border:1px solid #8ab8e6;box-sizing:border-box"></div>
<div style="left:738px;top:54px;width:32px;height:32px;background:#fff;border:1px solid #7a7a7a;box-sizing:border-box"></div>
<div style="left:740px;top:56px;width:28px;height:28px;background:#ed1c24"></div>
<div class="t" style="left:739.5px;top:90.3px;font-size:11.7px;line-height:12px;color:#262626;transform:scaleX(0.964);transform-origin:center;">Kolor</div>
<div class="t" style="left:750.2px;top:102.8px;font-size:11.7px;line-height:12px;color:#262626;">1</div>
<div style="left:784px;top:58px;width:24px;height:24px;background:#fff;border:1px solid #7a7a7a;box-sizing:border-box"></div>
<div class="t" style="left:782.0px;top:90.3px;font-size:11.7px;line-height:12px;color:#262626;transform:scaleX(0.964);transform-origin:center;">Kolor</div>
<div class="t" style="left:792.7px;top:102.8px;font-size:11.7px;line-height:12px;color:#262626;">2</div>
<div style="left:818px;top:52px;width:20px;height:20px;border:1px solid #a0a0a0;box-sizing:border-box;background:#fff"></div>
<div style="left:820px;top:54px;width:16px;height:16px;background:#000000"></div>
<div style="left:840px;top:52px;width:20px;height:20px;border:1px solid #a0a0a0;box-sizing:border-box;background:#fff"></div>
<div style="left:842px;top:54px;width:16px;height:16px;background:#7f7f7f"></div>
<div style="left:862px;top:52px;width:20px;height:20px;border:1px solid #a0a0a0;box-sizing:border-box;background:#fff"></div>
<div style="left:864px;top:54px;width:16px;height:16px;background:#880015"></div>
<div style="left:884px;top:52px;width:20px;height:20px;border:1px solid #a0a0a0;box-sizing:border-box;background:#fff"></div>
<div style="left:886px;top:54px;width:16px;height:16px;background:#ed1c24"></div>
<div style="left:906px;top:52px;width:20px;height:20px;border:1px solid #a0a0a0;box-sizing:border-box;background:#fff"></div>
<div style="left:908px;top:54px;width:16px;height:16px;background:#ff7f27"></div>
<div style="left:928px;top:52px;width:20px;height:20px;border:1px solid #a0a0a0;box-sizing:border-box;background:#fff"></div>
<div style="left:930px;top:54px;width:16px;height:16px;background:#fff200"></div>
<div style="left:950px;top:52px;width:20px;height:20px;border:1px solid #a0a0a0;box-sizing:border-box;background:#fff"></div>
<div style="left:952px;top:54px;width:16px;height:16px;background:#22b14c"></div>
<div style="left:972px;top:52px;width:20px;height:20px;border:1px solid #a0a0a0;box-sizing:border-box;background:#fff"></div>
<div style="left:974px;top:54px;width:16px;height:16px;background:#00a2e8"></div>
<div style="left:994px;top:52px;width:20px;height:20px;border:1px solid #a0a0a0;box-sizing:border-box;background:#fff"></div>
<div style="left:996px;top:54px;width:16px;height:16px;background:#3f48cc"></div>
<div style="left:1016px;top:52px;width:20px;height:20px;border:1px solid #a0a0a0;box-sizing:border-box;background:#fff"></div>
<div style="left:1018px;top:54px;width:16px;height:16px;background:#a349a4"></div>
<div style="left:818px;top:74px;width:20px;height:20px;border:1px solid #a0a0a0;box-sizing:border-box;background:#fff"></div>
<div style="left:820px;top:76px;width:16px;height:16px;background:#ffffff"></div>
<div style="left:840px;top:74px;width:20px;height:20px;border:1px solid #a0a0a0;box-sizing:border-box;background:#fff"></div>
<div style="left:842px;top:76px;width:16px;height:16px;background:#c3c3c3"></div>
<div style="left:862px;top:74px;width:20px;height:20px;border:1px solid #a0a0a0;box-sizing:border-box;background:#fff"></div>
<div style="left:864px;top:76px;width:16px;height:16px;background:#b97a57"></div>
<div style="left:884px;top:74px;width:20px;height:20px;border:1px solid #a0a0a0;box-sizing:border-box;background:#fff"></div>
<div style="left:886px;top:76px;width:16px;height:16px;background:#ffaec9"></div>
<div style="left:906px;top:74px;width:20px;height:20px;border:1px solid #a0a0a0;box-sizing:border-box;background:#fff"></div>
<div style="left:908px;top:76px;width:16px;height:16px;background:#ffc90e"></div>
<div style="left:928px;top:74px;width:20px;height:20px;border:1px solid #a0a0a0;box-sizing:border-box;background:#fff"></div>
<div style="left:930px;top:76px;width:16px;height:16px;background:#efe4b0"></div>
<div style="left:950px;top:74px;width:20px;height:20px;border:1px solid #a0a0a0;box-sizing:border-box;background:#fff"></div>
<div style="left:952px;top:76px;width:16px;height:16px;background:#b5e61d"></div>
<div style="left:972px;top:74px;width:20px;height:20px;border:1px solid #a0a0a0;box-sizing:border-box;background:#fff"></div>
<div style="left:974px;top:76px;width:16px;height:16px;background:#99d9ea"></div>
<div style="left:994px;top:74px;width:20px;height:20px;border:1px solid #a0a0a0;box-sizing:border-box;background:#fff"></div>
<div style="left:996px;top:76px;width:16px;height:16px;background:#7092be"></div>
<div style="left:1016px;top:74px;width:20px;height:20px;border:1px solid #a0a0a0;box-sizing:border-box;background:#fff"></div>
<div style="left:1018px;top:76px;width:16px;height:16px;background:#c8bfe7"></div>
<div style="left:818px;top:96px;width:20px;height:20px;border:1px solid #a0a0a0;box-sizing:border-box;background:#f5f6f7"></div>
<div style="left:840px;top:96px;width:20px;height:20px;border:1px solid #a0a0a0;box-sizing:border-box;background:#f5f6f7"></div>
<div style="left:862px;top:96px;width:20px;height:20px;border:1px solid #a0a0a0;box-sizing:border-box;background:#f5f6f7"></div>
<div style="left:884px;top:96px;width:20px;height:20px;border:1px solid #a0a0a0;box-sizing:border-box;background:#f5f6f7"></div>
<div style="left:906px;top:96px;width:20px;height:20px;border:1px solid #a0a0a0;box-sizing:border-box;background:#f5f6f7"></div>
<div style="left:928px;top:96px;width:20px;height:20px;border:1px solid #a0a0a0;box-sizing:border-box;background:#f5f6f7"></div>
<div style="left:950px;top:96px;width:20px;height:20px;border:1px solid #a0a0a0;box-sizing:border-box;background:#f5f6f7"></div>
<div style="left:972px;top:96px;width:20px;height:20px;border:1px solid #a0a0a0;box-sizing:border-box;background:#f5f6f7"></div>
<div style="left:994px;top:96px;width:20px;height:20px;border:1px solid #a0a0a0;box-sizing:border-box;background:#f5f6f7"></div>
<div style="left:1016px;top:96px;width:20px;height:20px;border:1px solid #a0a0a0;box-sizing:border-box;background:#f5f6f7"></div>
<svg style="left:1043px;top:55px;" width="29" height="29" viewBox="0 0 29 29"><defs><linearGradient id="rb" x1="0" x2="1" y1="0" y2="0"><stop offset="0" stop-color="#f00"/><stop offset="0.17" stop-color="#ff0"/><stop offset="0.33" stop-color="#0f0"/><stop offset="0.5" stop-color="#0ff"/><stop offset="0.67" stop-color="#00f"/><stop offset="0.83" stop-color="#f0f"/><stop offset="1" stop-color="#f03"/></linearGradient>
       <linearGradient id="gv" x1="0" x2="0" y1="0" y2="1"><stop offset="0" stop-color="#808080" stop-opacity="0"/><stop offset="1" stop-color="#808080" stop-opacity="1"/></linearGradient></defs>
       <rect x="0.5" y="0.5" width="27" height="27" fill="#fff" stroke="#8a8a8a"/><rect x="2" y="2" width="24" height="24" fill="url(#rb)"/><rect x="2" y="2" width="24" height="24" fill="url(#gv)"/></svg>
<div class="t" style="left:1040.3px;top:90.3px;font-size:11.7px;line-height:12px;color:#262626;transform:scaleX(0.960);transform-origin:center;">Edytuj</div>
<div class="t" style="left:1041.0px;top:102.8px;font-size:11.7px;line-height:12px;color:#262626;transform:scaleX(0.969);transform-origin:center;">kolory</div>
</body></html>
